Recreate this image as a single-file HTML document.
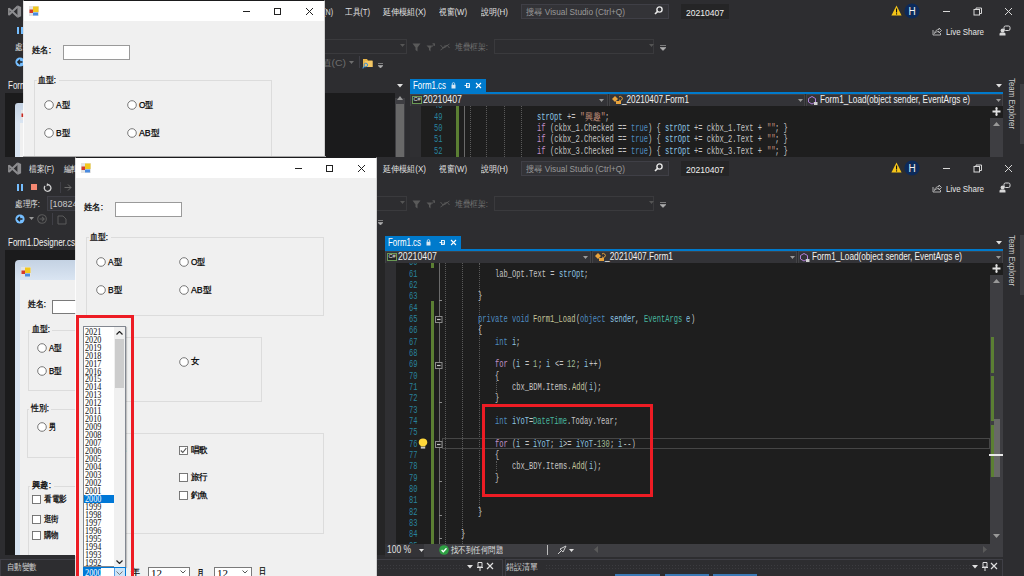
<!DOCTYPE html>
<html><head><meta charset="utf-8"><style>
html,body{margin:0;padding:0;}
body{width:1024px;height:576px;overflow:hidden;position:relative;background:#2d2d30;font-family:"Liberation Sans",sans-serif;}
div,span{position:absolute;white-space:pre;}
</style></head><body>
<div style="left:0;top:0;width:1024px;height:157px;overflow:hidden;background:#2d2d30">
<svg style="position:absolute;left:4px;top:3px" width="24" height="20" viewBox="0 0 24 20"><g fill="#8d8d90" stroke="none"><path d="M13.4 2.2 L17.1 3.9 V13.3 L13.4 15 L13.4 2.2 Z"/><rect x="4.1" y="5" width="1.6" height="7.3"/></g><path d="M4.9 5.6 L13.6 13.6 M4.9 11.7 L13.6 3.6" stroke="#8d8d90" stroke-width="2.1" fill="none"/></svg>
<span class="t" style="left:29px;top:8.27px;font-size:9px;line-height:9px;color:#e0e0e0;font-family:'Liberation Sans', sans-serif;transform:scaleX(0.8475);transform-origin:0 0;">檔案(F)</span>
<span class="t" style="left:64px;top:8.27px;font-size:9px;line-height:9px;color:#e0e0e0;font-family:'Liberation Sans', sans-serif;transform:scaleX(0.8333);transform-origin:0 0;">編輯(E)</span>
<span class="t" style="left:99px;top:8.27px;font-size:9px;line-height:9px;color:#e0e0e0;font-family:'Liberation Sans', sans-serif;transform:scaleX(0.8333);transform-origin:0 0;">檢視(V)</span>
<span class="t" style="left:134px;top:8.27px;font-size:9px;line-height:9px;color:#e0e0e0;font-family:'Liberation Sans', sans-serif;transform:scaleX(0.8333);transform-origin:0 0;">專案(P)</span>
<span class="t" style="left:169px;top:8.27px;font-size:9px;line-height:9px;color:#e0e0e0;font-family:'Liberation Sans', sans-serif;transform:scaleX(0.8333);transform-origin:0 0;">建置(B)</span>
<span class="t" style="left:204px;top:8.27px;font-size:9px;line-height:9px;color:#e0e0e0;font-family:'Liberation Sans', sans-serif;transform:scaleX(0.8197);transform-origin:0 0;">偵錯(D)</span>
<span class="t" style="left:239px;top:8.27px;font-size:9px;line-height:9px;color:#e0e0e0;font-family:'Liberation Sans', sans-serif;transform:scaleX(0.8333);transform-origin:0 0;">測試(S)</span>
<span class="t" style="left:274px;top:8.27px;font-size:9px;line-height:9px;color:#e0e0e0;font-family:'Liberation Sans', sans-serif;transform:scaleX(0.8197);transform-origin:0 0;">分析(N)</span>
<span class="t" style="left:309px;top:8.27px;font-size:9px;line-height:9px;color:#e0e0e0;font-family:'Liberation Sans', sans-serif;transform:scaleX(0.7869);transform-origin:0 0;">分析(N)</span>
<span class="t" style="left:345px;top:8.27px;font-size:9px;line-height:9px;color:#e0e0e0;font-family:'Liberation Sans', sans-serif;transform:scaleX(0.8475);transform-origin:0 0;">工具(T)</span>
<span class="t" style="left:383px;top:8.27px;font-size:9px;line-height:9px;color:#e0e0e0;font-family:'Liberation Sans', sans-serif;transform:scaleX(0.8958);transform-origin:0 0;">延伸模組(X)</span>
<span class="t" style="left:439px;top:8.27px;font-size:9px;line-height:9px;color:#e0e0e0;font-family:'Liberation Sans', sans-serif;transform:scaleX(0.8615);transform-origin:0 0;">視窗(W)</span>
<span class="t" style="left:481px;top:8.27px;font-size:9px;line-height:9px;color:#e0e0e0;font-family:'Liberation Sans', sans-serif;transform:scaleX(0.8852);transform-origin:0 0;">說明(H)</span>
<div style="left:521px;top:4px;width:148px;height:15px;background:#333337;border:1px solid #3f3f46;box-sizing:border-box"></div>
<span class="t" style="left:526px;top:7.77px;font-size:9px;line-height:9px;color:#999999;font-family:'Liberation Sans', sans-serif;transform:scaleX(0.9199);transform-origin:0 0;">搜尋 Visual Studio (Ctrl+Q)</span>
<svg style="position:absolute;left:654px;top:6px" width="9" height="9" viewBox="0 0 9 9"><circle cx="5.5" cy="3.5" r="2.6" fill="none" stroke="#e8e8e8" stroke-width="1.4"/><path d="M3.6 5.4 L1 8" stroke="#e8e8e8" stroke-width="1.6"/></svg>
<div style="left:681px;top:4px;width:48px;height:15px;background:#252526"></div>
<span class="t" style="left:686px;top:8.04px;font-size:9.5px;line-height:9.5px;color:#f1f1f1;font-family:'Liberation Sans', sans-serif;transform:scaleX(0.8987);transform-origin:0 0;">20210407</span>
<svg style="position:absolute;left:891px;top:5px" width="11" height="11" viewBox="0 0 11 11"><path d="M5.5 0.5 L10.6 10.5 H0.4 Z" fill="#f5c518"/><rect x="5" y="3.5" width="1.1" height="4" fill="#111"/><rect x="5" y="8.3" width="1.1" height="1.2" fill="#111"/></svg>
<svg style="position:absolute;left:904px;top:3px" width="16" height="16" viewBox="0 0 16 16"><circle cx="8" cy="8" r="7.6" fill="#0c2a5a"/><text x="8" y="11.6" font-family="Liberation Sans" font-size="10" fill="#f0f0f0" text-anchor="middle">H</text></svg>
<div style="left:943px;top:11px;width:7px;height:1px;background:#d8d8d8"></div>
<svg style="position:absolute;left:973px;top:7px" width="10" height="9" viewBox="0 0 10 9"><rect x="1" y="2.5" width="5.5" height="5.5" fill="none" stroke="#d8d8d8" stroke-width="1"/><path d="M3 2.5 V1 H8.5 V6.5 H6.5" fill="none" stroke="#d8d8d8" stroke-width="1"/></svg>
<svg style="position:absolute;left:1004px;top:7px" width="9" height="9" viewBox="0 0 9 9"><path d="M1 1 L8 8 M8 1 L1 8" stroke="#d8d8d8" stroke-width="1"/></svg>
<div style="left:7px;top:25px;width:3px;height:11px;background-image:radial-gradient(#55555a 0.6px, transparent 0.7px);background-size:2px 2px"></div>
<div style="left:7px;top:40px;width:3px;height:13px;background-image:radial-gradient(#55555a 0.6px, transparent 0.7px);background-size:2px 2px"></div>
<div style="left:7px;top:56px;width:3px;height:12px;background-image:radial-gradient(#55555a 0.6px, transparent 0.7px);background-size:2px 2px"></div>
<div style="left:17px;top:27px;width:2px;height:7px;background:#75beff"></div>
<div style="left:20.5px;top:27px;width:2px;height:7px;background:#75beff"></div>
<div style="left:31px;top:27px;width:6px;height:6px;background:#f48771"></div>
<svg style="position:absolute;left:43px;top:26px" width="9" height="9" viewBox="0 0 9 9"><path d="M2 3 A3.3 3.3 0 1 0 4.5 1.7" fill="none" stroke="#d0d0d0" stroke-width="1.3"/><path d="M4 0 L6 2 L3.5 3.2 Z" fill="#d0d0d0"/></svg>
<div style="left:60px;top:25px;width:1px;height:11px;background:#3f3f46"></div>
<svg style="position:absolute;left:64px;top:26px" width="8" height="9" viewBox="0 0 8 9"><path d="M0.5 4.5 H7 M4 1.5 L7 4.5 L4 7.5" fill="none" stroke="#6a6a6a" stroke-width="1"/></svg>
<svg style="position:absolute;left:932px;top:26px" width="10" height="10" viewBox="0 0 10 10"><path d="M1 4 V9 H8.5 V7" fill="none" stroke="#bfbfbf" stroke-width="0.9"/><path d="M2.5 7.5 C3 4.5 5 3.5 7 3.5 V2 L9.5 4.5 L7 7 V5.5 C5 5.5 3.8 6 2.5 7.5 Z" fill="none" stroke="#bfbfbf" stroke-width="0.9"/></svg>
<span class="t" style="left:946px;top:27.04px;font-size:9.5px;line-height:9.5px;color:#e6e6e6;font-family:'Liberation Sans', sans-serif;transform:scaleX(0.8366);transform-origin:0 0;">Live Share</span>
<svg style="position:absolute;left:999px;top:25px" width="12" height="11" viewBox="0 0 12 11"><rect x="5" y="1" width="6" height="4.5" rx="1.5" fill="none" stroke="#d8d8d8" stroke-width="1"/><circle cx="3.6" cy="5.5" r="2" fill="#d8d8d8"/><path d="M0.5 10.5 V9 C0.5 8 1.5 7.6 3.6 7.6 C5.7 7.6 6.5 8 6.5 9 V10.5 Z" fill="#d8d8d8"/></svg>
<span class="t" style="left:15px;top:42.77px;font-size:9px;line-height:9px;color:#e0e0e0;font-family:'Liberation Sans', sans-serif;transform:scaleX(0.8470);transform-origin:0 0;">處理序:</span>
<div style="left:47px;top:39px;width:120px;height:15px;background:#333337;border:1px solid #3f3f46;box-sizing:border-box"></div>
<span class="t" style="left:50px;top:42.77px;font-size:9px;line-height:9px;color:#c8c8c8;font-family:'Liberation Sans', sans-serif;transform:scaleX(1.0045);transform-origin:0 0;">[10824] 20210407.exe</span>
<div style="left:180px;top:39px;width:227px;height:15px;background:#2d2d30;border:1px solid #3a3a3d;box-sizing:border-box"></div>
<svg style="position:absolute;left:400px;top:44px" width="5" height="4" viewBox="0 0 5 4"><path d="M0 0 H5 L2.5 3 Z" fill="#555"/></svg>
<svg style="position:absolute;left:412px;top:43px" width="9" height="9" viewBox="0 0 9 9"><path d="M0.5 0.5 H8.5 L5.5 4.5 V8.5 L3.5 7 V4.5 Z" fill="#5a5a5a"/></svg>
<svg style="position:absolute;left:426px;top:43px" width="9" height="9" viewBox="0 0 9 9"><path d="M0.5 2.5 H6 L4.5 5 V8.5 L3 7 V5 Z" fill="#5a5a5a"/><path d="M5 4.5 L8.5 1 M6.5 0.8 H8.7 V3" fill="none" stroke="#5a5a5a"/></svg>
<svg style="position:absolute;left:440px;top:43px" width="10" height="8" viewBox="0 0 10 8"><path d="M0.5 2 L3 5 L5.5 2 M4.5 5 L7 2 L9.5 5 M0.5 7 L9.5 1" fill="none" stroke="#5a5a5a" stroke-width="0.9"/></svg>
<span class="t" style="left:455px;top:42.77px;font-size:9px;line-height:9px;color:#6e6e6e;font-family:'Liberation Sans', sans-serif;transform:scaleX(0.8568);transform-origin:0 0;">堆疊框架:</span>
<div style="left:494px;top:39px;width:160px;height:15px;background:#2d2d30;border:1px solid #3a3a3d;box-sizing:border-box"></div>
<svg style="position:absolute;left:649px;top:44px" width="5" height="4" viewBox="0 0 5 4"><path d="M0 0 H5 L2.5 3 Z" fill="#555"/></svg>
<svg style="position:absolute;left:660px;top:45px" width="6" height="6" viewBox="0 0 6 6"><path d="M0 0.5 H6 M0 2.5 H6 L3 5.5 Z" fill="#b0b0b0" stroke="#b0b0b0" stroke-width="0.6"/></svg>
<svg style="position:absolute;left:15px;top:57px" width="10" height="10" viewBox="0 0 10 10"><circle cx="5" cy="5" r="4.6" fill="#75beff"/><path d="M7.5 5 H3 M5 2.8 L2.8 5 L5 7.2" fill="none" stroke="#1e1e1e" stroke-width="1.3"/></svg>
<svg style="position:absolute;left:29px;top:60px" width="5" height="4" viewBox="0 0 5 4"><path d="M0 0 H5 L2.5 3 Z" fill="#999"/></svg>
<svg style="position:absolute;left:37px;top:57px" width="10" height="10" viewBox="0 0 10 10"><circle cx="5" cy="5" r="4.3" fill="none" stroke="#5a5a5a" stroke-width="1.1"/><path d="M2.5 5 H7 M5 2.8 L7.2 5 L5 7.2" fill="none" stroke="#5a5a5a" stroke-width="1.1"/></svg>
<div style="left:52px;top:56px;width:1px;height:12px;background:#3f3f46"></div>
<svg style="position:absolute;left:57px;top:57px" width="10" height="11" viewBox="0 0 10 11"><path d="M1 2 H6 L9 5 V10 H1 Z" fill="none" stroke="#5a5a5a"/></svg>
<span class="t" style="left:300px;top:58.77px;font-size:9px;line-height:9px;color:#6e6e6e;font-family:'Liberation Sans', sans-serif;transform:scaleX(1.1646);transform-origin:0 0;">顯示值(C)</span>
<svg style="position:absolute;left:349px;top:61px" width="5" height="4" viewBox="0 0 5 4"><path d="M0 0 H5 L2.5 3 Z" fill="#6e6e6e"/></svg>
<div style="left:359px;top:56px;width:1px;height:12px;background:#3f3f46"></div>
<svg style="position:absolute;left:362px;top:57px" width="11" height="12" viewBox="0 0 11 12"><path d="M1 2 H5 L6 3.5 H10.5 V10 H1 Z" fill="#e8b54a"/><rect x="3" y="4" width="7.5" height="6" fill="#f3c766"/><circle cx="3.8" cy="8" r="1.8" fill="none" stroke="#3f8fd6" stroke-width="1"/><path d="M2.6 9.3 L0.6 11.3" stroke="#3f8fd6" stroke-width="1.2"/></svg>
<svg style="position:absolute;left:378px;top:63px" width="5" height="6" viewBox="0 0 5 6"><path d="M0 0.5 H5 M0 2.5 H5 L2.5 5 Z" fill="#b0b0b0" stroke="#b0b0b0" stroke-width="0.6"/></svg>
<span class="t" style="left:1007px;top:78px;font-size:9px;line-height:9px;transform:scaleY(0.88);transform-origin:0 0;color:#c8c8c8;font-family:'Liberation Sans',sans-serif;writing-mode:vertical-rl;">Team Explorer</span>
<div style="left:1020px;top:84px;width:4px;height:60px;background:#3e3e42"></div>
<div style="left:410px;top:79px;width:76px;height:13px;background:#007acc"></div>
<span class="t" style="left:413px;top:81.30px;font-size:10px;line-height:10px;color:#ffffff;font-family:'Liberation Sans', sans-serif;transform:scaleX(0.7919);transform-origin:0 0;">Form1.cs</span>
<svg style="position:absolute;left:451px;top:82px" width="5" height="7" viewBox="0 0 5 7"><rect x="0.5" y="2.8" width="4" height="3.7" fill="#d8e8f4"/><path d="M1.3 3 V1.8 A1.2 1.2 0 0 1 3.7 1.8 V3" fill="none" stroke="#d8e8f4" stroke-width="0.8"/></svg>
<svg style="position:absolute;left:464px;top:82px" width="7" height="7" viewBox="0 0 7 7"><path d="M0.5 3.5 H2.5 M2.5 1 V6 M2.5 1.5 H5.5 V5.5 H2.5 M2.5 4 H5.5" fill="none" stroke="#fff" stroke-width="0.9"/></svg>
<svg style="position:absolute;left:475px;top:82px" width="7" height="7" viewBox="0 0 7 7"><path d="M1 1 L6 6 M6 1 L1 6" stroke="#fff" stroke-width="1.1"/></svg>
<div style="left:410px;top:92px;width:593px;height:2px;background:#007acc"></div>
<div style="left:410px;top:94px;width:593px;height:12.5px;background:#2d2d30"></div>
<div style="left:410px;top:94px;width:198px;height:12.5px;background:#333337;border:1px solid #434346;box-sizing:border-box"></div>
<div style="left:609px;top:94px;width:196px;height:12.5px;background:#333337;border:1px solid #434346;box-sizing:border-box"></div>
<div style="left:806px;top:94px;width:197px;height:12.5px;background:#333337;border:1px solid #434346;box-sizing:border-box"></div>
<div style="left:412px;top:95.5px;width:10px;height:8px;border:1px solid #6a9955;box-sizing:border-box;background:#252526"></div>
<span class="t" style="left:413.5px;top:97.12px;font-size:5.5px;line-height:5.5px;color:#e0e0e0;font-family:'Liberation Sans', sans-serif;">C#</span>
<span class="t" style="left:423px;top:95.30px;font-size:10px;line-height:10px;color:#f1f1f1;font-family:'Liberation Sans', sans-serif;transform:scaleX(0.8764);transform-origin:0 0;">20210407</span>
<svg style="position:absolute;left:599px;top:99px" width="5" height="3" viewBox="0 0 5 3"><path d="M0 0 H5 L2.5 3 Z" fill="#999"/></svg>
<svg style="position:absolute;left:611px;top:95px" width="12" height="10" viewBox="0 0 12 10"><path d="M1 4 L4 1 L7 4 L4 7 Z" fill="#e8a33d"/><path d="M5 6 H10 V9 H5 Z" fill="#e8a33d"/><path d="M8 2 A2 2 0 1 1 8 5" fill="none" stroke="#e8a33d" stroke-width="1"/></svg>
<span class="t" style="left:622px;top:95.30px;font-size:10px;line-height:10px;color:#f1f1f1;font-family:'Liberation Sans', sans-serif;transform:scaleX(0.8197);transform-origin:0 0;">_20210407.Form1</span>
<svg style="position:absolute;left:798px;top:99px" width="5" height="3" viewBox="0 0 5 3"><path d="M0 0 H5 L2.5 3 Z" fill="#999"/></svg>
<svg style="position:absolute;left:808px;top:96px" width="10" height="10" viewBox="0 0 10 10"><path d="M4 0.5 L7.5 2.5 V6 L4 8 L0.5 6 V2.5 Z" fill="none" stroke="#b180d7" stroke-width="1"/><rect x="6" y="6" width="3.5" height="3" fill="#d0d0d0"/></svg>
<span class="t" style="left:820px;top:95.30px;font-size:10px;line-height:10px;color:#f1f1f1;font-family:'Liberation Sans', sans-serif;transform:scaleX(0.8202);transform-origin:0 0;">Form1_Load(object sender, EventArgs e)</span>
<svg style="position:absolute;left:996px;top:99px" width="5" height="3" viewBox="0 0 5 3"><path d="M0 0 H5 L2.5 3 Z" fill="#999"/></svg>
<svg style="position:absolute;left:996px;top:84px" width="6" height="4" viewBox="0 0 6 4"><path d="M0 0 H6 L3 3.5 Z" fill="#e0e0e0"/></svg>
<div style="left:410px;top:106px;width:580px;height:281px;background:#1e1e1e"></div>
<div style="left:410px;top:106px;width:11px;height:281px;background:#2f2f32"></div>
<div style="left:990px;top:106px;width:13px;height:281px;background:#3e3e42"></div>
<div style="left:990px;top:106px;width:13px;height:12px;background:#1e1e1e"></div>
<svg style="position:absolute;left:992px;top:107px" width="9" height="9" viewBox="0 0 9 9"><path d="M4.5 0.5 V8.5 M0.5 4.5 H8.5" stroke="#e0e0e0" stroke-width="1.8"/><path d="M3 1.5 L4.5 0 L6 1.5 M3 7.5 L4.5 9 L6 7.5" fill="#e0e0e0"/></svg>
<svg style="position:absolute;left:993px;top:122px" width="7" height="4" viewBox="0 0 7 4"><path d="M0 4 L3.5 0 L7 4 Z" fill="#999"/></svg>
<div style="left:470px;top:106px;width:1px;height:51px;border-left:1px dotted #5a5a5a"></div>
<div style="left:486px;top:106px;width:1px;height:51px;border-left:1px dotted #5a5a5a"></div>
<div style="left:504px;top:106px;width:1px;height:51px;border-left:1px dotted #5a5a5a"></div>
<div style="left:521px;top:106px;width:1px;height:51px;border-left:1px dotted #5a5a5a"></div>
<div style="left:456px;top:106px;width:3px;height:51px;background:#5b7f33"></div>
<div style="left:463.5px;top:106px;width:1px;height:51px;background:#6a6a6a"></div>
<div style="left:0px;top:106px;width:1024px;height:51px;overflow:hidden">
<span class="t" style="left:434px;top:-4.63px;font-size:10px;line-height:10px;color:#2b91af;font-family:'Liberation Mono', monospace;transform:scaleX(0.7074);transform-origin:0 0;opacity:0.88;">48</span>
<span class="t" style="left:434px;top:6.70px;font-size:10px;line-height:10px;color:#2b91af;font-family:'Liberation Mono', monospace;transform:scaleX(0.7074);transform-origin:0 0;opacity:0.88;">49</span>
<span class="t" style="left:537.0px;top:6.70px;font-size:10px;line-height:10px;color:#9cdcfe;font-family:'Liberation Mono', monospace;transform:scaleX(0.7080);transform-origin:0 0;opacity:0.88;">strOpt</span>
<span class="t" style="left:566.75px;top:6.70px;font-size:10px;line-height:10px;color:#dcdcdc;font-family:'Liberation Mono', monospace;transform:scaleX(0.7077);transform-origin:0 0;opacity:0.88;">+= </span>
<span class="t" style="left:579.5px;top:6.70px;font-size:10px;line-height:10px;color:#d69d85;font-family:'Liberation Mono', monospace;transform:scaleX(0.7965);transform-origin:0 0;opacity:0.88;">&quot;興趣&quot;</span>
<span class="t" style="left:605.0px;top:6.70px;font-size:10px;line-height:10px;color:#dcdcdc;font-family:'Liberation Mono', monospace;transform:scaleX(0.7065);transform-origin:0 0;opacity:0.88;">;</span>
<span class="t" style="left:434px;top:18.03px;font-size:10px;line-height:10px;color:#2b91af;font-family:'Liberation Mono', monospace;transform:scaleX(0.7074);transform-origin:0 0;opacity:0.88;">50</span>
<span class="t" style="left:537.0px;top:18.03px;font-size:10px;line-height:10px;color:#d8a0df;font-family:'Liberation Mono', monospace;transform:scaleX(0.7074);transform-origin:0 0;opacity:0.88;">if</span>
<span class="t" style="left:549.75px;top:18.03px;font-size:10px;line-height:10px;color:#dcdcdc;font-family:'Liberation Mono', monospace;transform:scaleX(0.7081);transform-origin:0 0;opacity:0.88;">(ckbx_1.Checked == </span>
<span class="t" style="left:630.5px;top:18.03px;font-size:10px;line-height:10px;color:#569cd6;font-family:'Liberation Mono', monospace;transform:scaleX(0.7079);transform-origin:0 0;opacity:0.88;">true</span>
<span class="t" style="left:647.5px;top:18.03px;font-size:10px;line-height:10px;color:#dcdcdc;font-family:'Liberation Mono', monospace;transform:scaleX(0.7079);transform-origin:0 0;opacity:0.88;">) { </span>
<span class="t" style="left:664.5px;top:18.03px;font-size:10px;line-height:10px;color:#9cdcfe;font-family:'Liberation Mono', monospace;transform:scaleX(0.7080);transform-origin:0 0;opacity:0.88;">strOpt</span>
<span class="t" style="left:694.25px;top:18.03px;font-size:10px;line-height:10px;color:#dcdcdc;font-family:'Liberation Mono', monospace;transform:scaleX(0.7081);transform-origin:0 0;opacity:0.88;">+= ckbx_1.Text + </span>
<span class="t" style="left:766.5px;top:18.03px;font-size:10px;line-height:10px;color:#d69d85;font-family:'Liberation Mono', monospace;transform:scaleX(0.7074);transform-origin:0 0;opacity:0.88;">&quot;&quot;</span>
<span class="t" style="left:775.0px;top:18.03px;font-size:10px;line-height:10px;color:#dcdcdc;font-family:'Liberation Mono', monospace;transform:scaleX(0.7077);transform-origin:0 0;opacity:0.88;">; }</span>
<span class="t" style="left:434px;top:29.35px;font-size:10px;line-height:10px;color:#2b91af;font-family:'Liberation Mono', monospace;transform:scaleX(0.7074);transform-origin:0 0;opacity:0.88;">51</span>
<span class="t" style="left:537.0px;top:29.35px;font-size:10px;line-height:10px;color:#d8a0df;font-family:'Liberation Mono', monospace;transform:scaleX(0.7074);transform-origin:0 0;opacity:0.88;">if</span>
<span class="t" style="left:549.75px;top:29.35px;font-size:10px;line-height:10px;color:#dcdcdc;font-family:'Liberation Mono', monospace;transform:scaleX(0.7081);transform-origin:0 0;opacity:0.88;">(ckbx_2.Checked == </span>
<span class="t" style="left:630.5px;top:29.35px;font-size:10px;line-height:10px;color:#569cd6;font-family:'Liberation Mono', monospace;transform:scaleX(0.7079);transform-origin:0 0;opacity:0.88;">true</span>
<span class="t" style="left:647.5px;top:29.35px;font-size:10px;line-height:10px;color:#dcdcdc;font-family:'Liberation Mono', monospace;transform:scaleX(0.7079);transform-origin:0 0;opacity:0.88;">) { </span>
<span class="t" style="left:664.5px;top:29.35px;font-size:10px;line-height:10px;color:#9cdcfe;font-family:'Liberation Mono', monospace;transform:scaleX(0.7080);transform-origin:0 0;opacity:0.88;">strOpt</span>
<span class="t" style="left:694.25px;top:29.35px;font-size:10px;line-height:10px;color:#dcdcdc;font-family:'Liberation Mono', monospace;transform:scaleX(0.7081);transform-origin:0 0;opacity:0.88;">+= ckbx_2.Text + </span>
<span class="t" style="left:766.5px;top:29.35px;font-size:10px;line-height:10px;color:#d69d85;font-family:'Liberation Mono', monospace;transform:scaleX(0.7074);transform-origin:0 0;opacity:0.88;">&quot;&quot;</span>
<span class="t" style="left:775.0px;top:29.35px;font-size:10px;line-height:10px;color:#dcdcdc;font-family:'Liberation Mono', monospace;transform:scaleX(0.7077);transform-origin:0 0;opacity:0.88;">; }</span>
<span class="t" style="left:434px;top:40.68px;font-size:10px;line-height:10px;color:#2b91af;font-family:'Liberation Mono', monospace;transform:scaleX(0.7074);transform-origin:0 0;opacity:0.88;">52</span>
<span class="t" style="left:537.0px;top:40.68px;font-size:10px;line-height:10px;color:#d8a0df;font-family:'Liberation Mono', monospace;transform:scaleX(0.7074);transform-origin:0 0;opacity:0.88;">if</span>
<span class="t" style="left:549.75px;top:40.68px;font-size:10px;line-height:10px;color:#dcdcdc;font-family:'Liberation Mono', monospace;transform:scaleX(0.7081);transform-origin:0 0;opacity:0.88;">(ckbx_3.Checked == </span>
<span class="t" style="left:630.5px;top:40.68px;font-size:10px;line-height:10px;color:#569cd6;font-family:'Liberation Mono', monospace;transform:scaleX(0.7079);transform-origin:0 0;opacity:0.88;">true</span>
<span class="t" style="left:647.5px;top:40.68px;font-size:10px;line-height:10px;color:#dcdcdc;font-family:'Liberation Mono', monospace;transform:scaleX(0.7079);transform-origin:0 0;opacity:0.88;">) { </span>
<span class="t" style="left:664.5px;top:40.68px;font-size:10px;line-height:10px;color:#9cdcfe;font-family:'Liberation Mono', monospace;transform:scaleX(0.7080);transform-origin:0 0;opacity:0.88;">strOpt</span>
<span class="t" style="left:694.25px;top:40.68px;font-size:10px;line-height:10px;color:#dcdcdc;font-family:'Liberation Mono', monospace;transform:scaleX(0.7081);transform-origin:0 0;opacity:0.88;">+= ckbx_3.Text + </span>
<span class="t" style="left:766.5px;top:40.68px;font-size:10px;line-height:10px;color:#d69d85;font-family:'Liberation Mono', monospace;transform:scaleX(0.7074);transform-origin:0 0;opacity:0.88;">&quot;&quot;</span>
<span class="t" style="left:775.0px;top:40.68px;font-size:10px;line-height:10px;color:#dcdcdc;font-family:'Liberation Mono', monospace;transform:scaleX(0.7077);transform-origin:0 0;opacity:0.88;">; }</span>
</div>
<span class="t" style="left:8px;top:80.80px;font-size:10px;line-height:10px;color:#f1f1f1;font-family:'Liberation Sans', sans-serif;transform:scaleX(0.7984);transform-origin:0 0;">Form1.Designer.cs</span>
<div style="left:5px;top:93px;width:390px;height:64px;background:#1b1b1c"></div>
<div style="left:395px;top:98px;width:10px;height:59px;background:#3e3e42"></div>
<svg style="position:absolute;left:397px;top:96px" width="6" height="4" viewBox="0 0 6 4"><path d="M0 4 L3 0 L6 4 Z" fill="#999"/></svg>
<div style="left:396px;top:104px;width:8px;height:53px;background:#686868"></div>
<svg style="position:absolute;left:397px;top:84px" width="6" height="4" viewBox="0 0 6 4"><path d="M0 0 H6 L3 3.5 Z" fill="#e0e0e0"/></svg>
<div style="left:15px;top:103px;width:60px;height:54px;background:linear-gradient(#c4d2e3 0px,#dae5f2 20px,#d8e4f2 100%);border-radius:3px 3px 0 0"></div>
<div style="left:20px;top:123px;width:55px;height:34px;background:#f0f0f0"></div>
<svg style="position:absolute;left:21px;top:110px" width="10" height="10" viewBox="0 0 10 10"><rect x="0" y="0" width="10" height="10" fill="#e4e4e4"/><rect x="4" y="0.5" width="5.5" height="5.5" fill="#f2c81e"/><rect x="0.5" y="3.5" width="3.5" height="3.5" fill="#c8281e"/><rect x="4" y="6.5" width="5" height="3" fill="#4a8be0"/></svg>
<div style="left:23px;top:0px;width:302px;height:420px;background:#f0f0f0;border:1px solid rgba(0,0,0,0.38);border-left-color:rgba(255,255,255,0.85);border-right-color:#d0d0d0;background-clip:padding-box;box-sizing:border-box;overflow:hidden">
<div style="left:0px;top:0px;width:300px;height:20px;background:#ffffff"></div>
<svg style="position:absolute;left:5px;top:5px" width="10" height="10" viewBox="0 0 10 10"><rect x="0" y="0" width="10" height="10" fill="#e4e4e4"/><rect x="4" y="0.5" width="5.5" height="5.5" fill="#f2c81e"/><rect x="0.5" y="3.5" width="3.5" height="3.5" fill="#d43a2a"/><rect x="4" y="6.5" width="5" height="3" fill="#4a8be0"/></svg>
<div style="left:219px;top:10px;width:7px;height:1px;background:#222"></div>
<div style="left:250px;top:7px;width:7px;height:7px;border:1px solid #222;box-sizing:border-box"></div>
<svg style="position:absolute;left:281px;top:6px" width="9" height="9" viewBox="0 0 9 9"><path d="M1 1 L8 8 M8 1 L1 8" stroke="#222" stroke-width="1"/></svg>
<span class="t" style="left:8px;top:44.77px;font-size:9px;line-height:9px;color:#000000;font-family:'Liberation Sans', sans-serif;transform:scaleX(0.9261);transform-origin:0 0;-webkit-text-stroke:0.25px #000;">姓名:</span>
<div style="left:39px;top:44px;width:67px;height:15px;background:#fff;border:1px solid #9a9a9a;box-sizing:border-box"></div>
<div style="left:10px;top:79px;width:238px;height:79px;border:1px solid #dcdcdc;box-sizing:border-box"></div>
<div style="left:13px;top:74px;width:22px;height:10px;background:#f0f0f0"></div>
<span class="t" style="left:14px;top:74.77px;font-size:9px;line-height:9px;color:#000000;font-family:'Liberation Sans', sans-serif;transform:scaleX(0.8774);transform-origin:0 0;-webkit-text-stroke:0.25px #000;">血型:</span>
<svg style="position:absolute;left:20px;top:99px" width="10" height="10" viewBox="0 0 10 10"><circle cx="5" cy="5" r="4.3" fill="#fff" stroke="#6a6a6a" stroke-width="0.9"/></svg>
<span class="t" style="left:32px;top:99.77px;font-size:9px;line-height:9px;color:#000000;font-family:'Liberation Sans', sans-serif;transform:scaleX(0.9324);transform-origin:0 0;-webkit-text-stroke:0.25px #000;">A型</span>
<svg style="position:absolute;left:102.5px;top:99px" width="10" height="10" viewBox="0 0 10 10"><circle cx="5" cy="5" r="4.3" fill="#fff" stroke="#6a6a6a" stroke-width="0.9"/></svg>
<span class="t" style="left:114.5px;top:99.77px;font-size:9px;line-height:9px;color:#000000;font-family:'Liberation Sans', sans-serif;transform:scaleX(0.9054);transform-origin:0 0;-webkit-text-stroke:0.25px #000;">O型</span>
<svg style="position:absolute;left:20px;top:127px" width="10" height="10" viewBox="0 0 10 10"><circle cx="5" cy="5" r="4.3" fill="#fff" stroke="#6a6a6a" stroke-width="0.9"/></svg>
<span class="t" style="left:32px;top:127.77px;font-size:9px;line-height:9px;color:#000000;font-family:'Liberation Sans', sans-serif;transform:scaleX(0.9324);transform-origin:0 0;-webkit-text-stroke:0.25px #000;">B型</span>
<svg style="position:absolute;left:102.5px;top:127px" width="10" height="10" viewBox="0 0 10 10"><circle cx="5" cy="5" r="4.3" fill="#fff" stroke="#6a6a6a" stroke-width="0.9"/></svg>
<span class="t" style="left:114.5px;top:127.77px;font-size:9px;line-height:9px;color:#000000;font-family:'Liberation Sans', sans-serif;transform:scaleX(0.9755);transform-origin:0 0;-webkit-text-stroke:0.25px #000;">AB型</span>
<div style="left:10px;top:179px;width:176px;height:65px;border:1px solid #dcdcdc;box-sizing:border-box"></div>
<div style="left:13px;top:174px;width:22px;height:10px;background:#f0f0f0"></div>
<span class="t" style="left:14px;top:174.77px;font-size:9px;line-height:9px;color:#000000;font-family:'Liberation Sans', sans-serif;transform:scaleX(0.8774);transform-origin:0 0;-webkit-text-stroke:0.25px #000;">性別:</span>
<svg style="position:absolute;left:20px;top:198.5px" width="10" height="10" viewBox="0 0 10 10"><circle cx="5" cy="5" r="4.3" fill="#fff" stroke="#6a6a6a" stroke-width="0.9"/></svg>
<span class="t" style="left:32px;top:199.27px;font-size:9px;line-height:9px;color:#000000;font-family:'Liberation Sans', sans-serif;transform:scaleX(0.8889);transform-origin:0 0;-webkit-text-stroke:0.25px #000;">男</span>
<svg style="position:absolute;left:102.5px;top:198.5px" width="10" height="10" viewBox="0 0 10 10"><circle cx="5" cy="5" r="4.3" fill="#fff" stroke="#6a6a6a" stroke-width="0.9"/></svg>
<span class="t" style="left:114.5px;top:199.27px;font-size:9px;line-height:9px;color:#000000;font-family:'Liberation Sans', sans-serif;transform:scaleX(0.9444);transform-origin:0 0;-webkit-text-stroke:0.25px #000;">女</span>
<div style="left:10px;top:275px;width:238px;height:101px;border:1px solid #dcdcdc;box-sizing:border-box"></div>
<div style="left:13px;top:270px;width:22px;height:10px;background:#f0f0f0"></div>
<span class="t" style="left:14px;top:270.77px;font-size:9px;line-height:9px;color:#000000;font-family:'Liberation Sans', sans-serif;transform:scaleX(0.8774);transform-origin:0 0;-webkit-text-stroke:0.25px #000;">興趣:</span>
<svg style="position:absolute;left:103px;top:288.0px" width="9" height="9" viewBox="0 0 9 9"><rect x="0.5" y="0.5" width="8" height="8" fill="#fff" stroke="#6a6a6a" stroke-width="0.9"/><path d="M1.8 4.5 L3.8 6.5 L7.3 2.2" fill="none" stroke="#555" stroke-width="1.1"/></svg>
<span class="t" style="left:115px;top:288.27px;font-size:9px;line-height:9px;color:#000000;font-family:'Liberation Sans', sans-serif;transform:scaleX(0.9444);transform-origin:0 0;-webkit-text-stroke:0.25px #000;">唱歌</span>
<svg style="position:absolute;left:103px;top:315.0px" width="9" height="9" viewBox="0 0 9 9"><rect x="0.5" y="0.5" width="8" height="8" fill="#fff" stroke="#6a6a6a" stroke-width="0.9"/></svg>
<span class="t" style="left:115px;top:315.27px;font-size:9px;line-height:9px;color:#000000;font-family:'Liberation Sans', sans-serif;transform:scaleX(0.9444);transform-origin:0 0;-webkit-text-stroke:0.25px #000;">旅行</span>
<svg style="position:absolute;left:103px;top:332.5px" width="9" height="9" viewBox="0 0 9 9"><rect x="0.5" y="0.5" width="8" height="8" fill="#fff" stroke="#6a6a6a" stroke-width="0.9"/></svg>
<span class="t" style="left:115px;top:332.77px;font-size:9px;line-height:9px;color:#000000;font-family:'Liberation Sans', sans-serif;transform:scaleX(0.9444);transform-origin:0 0;-webkit-text-stroke:0.25px #000;">釣魚</span>
<svg style="position:absolute;left:20px;top:288.0px" width="9" height="9" viewBox="0 0 9 9"><rect x="0.5" y="0.5" width="8" height="8" fill="#fff" stroke="#6a6a6a" stroke-width="0.9"/></svg>
<span class="t" style="left:32px;top:288.27px;font-size:9px;line-height:9px;color:#000000;font-family:'Liberation Sans', sans-serif;transform:scaleX(0.6667);transform-origin:0 0;-webkit-text-stroke:0.25px #000;">看電影</span>
<svg style="position:absolute;left:20px;top:315.0px" width="9" height="9" viewBox="0 0 9 9"><rect x="0.5" y="0.5" width="8" height="8" fill="#fff" stroke="#6a6a6a" stroke-width="0.9"/></svg>
<span class="t" style="left:32px;top:315.27px;font-size:9px;line-height:9px;color:#000000;font-family:'Liberation Sans', sans-serif;transform:scaleX(0.5000);transform-origin:0 0;-webkit-text-stroke:0.25px #000;">逛街</span>
<svg style="position:absolute;left:20px;top:332.5px" width="9" height="9" viewBox="0 0 9 9"><rect x="0.5" y="0.5" width="8" height="8" fill="#fff" stroke="#6a6a6a" stroke-width="0.9"/></svg>
<span class="t" style="left:32px;top:332.77px;font-size:9px;line-height:9px;color:#000000;font-family:'Liberation Sans', sans-serif;transform:scaleX(0.5000);transform-origin:0 0;-webkit-text-stroke:0.25px #000;">購物</span>
<span class="t" style="left:55px;top:409.77px;font-size:9px;line-height:9px;color:#000000;font-family:'Liberation Sans', sans-serif;transform:scaleX(1.0000);transform-origin:0 0;-webkit-text-stroke:0.25px #000;">年</span>
<div style="left:72px;top:409px;width:42px;height:14px;background:#fff;border:1px solid #7a7a7a;box-sizing:border-box"></div>
<span class="t" style="left:75px;top:410.60px;font-size:10px;line-height:10px;color:#000000;font-family:'Liberation Serif', serif;transform:scaleX(1.1000);transform-origin:0 0;">12</span>
<svg style="position:absolute;left:104px;top:412px" width="6" height="4" viewBox="0 0 6 4"><path d="M0.5 0.5 L3 3 L5.5 0.5" fill="none" stroke="#444" stroke-width="0.9"/></svg>
<span class="t" style="left:121px;top:410.77px;font-size:9px;line-height:9px;color:#000000;font-family:'Liberation Sans', sans-serif;transform:scaleX(0.7778);transform-origin:0 0;-webkit-text-stroke:0.25px #000;">月</span>
<div style="left:138px;top:409px;width:38px;height:14px;background:#fff;border:1px solid #7a7a7a;box-sizing:border-box"></div>
<span class="t" style="left:141px;top:410.60px;font-size:10px;line-height:10px;color:#000000;font-family:'Liberation Serif', serif;transform:scaleX(1.1000);transform-origin:0 0;">12</span>
<svg style="position:absolute;left:166px;top:412px" width="6" height="4" viewBox="0 0 6 4"><path d="M0.5 0.5 L3 3 L5.5 0.5" fill="none" stroke="#444" stroke-width="0.9"/></svg>
<span class="t" style="left:183px;top:408.77px;font-size:9px;line-height:9px;color:#000000;font-family:'Liberation Sans', sans-serif;transform:scaleX(0.7778);transform-origin:0 0;-webkit-text-stroke:0.25px #000;">日</span>
</div>
<div style="left:23px;top:156px;width:303px;height:1px;background:#a8a8a8"></div>
</div>
<div style="left:0;top:157px;width:1024px;height:419px;overflow:hidden;background:#2d2d30">
<svg style="position:absolute;left:4px;top:3px" width="24" height="20" viewBox="0 0 24 20"><g fill="#8d8d90" stroke="none"><path d="M13.4 2.2 L17.1 3.9 V13.3 L13.4 15 L13.4 2.2 Z"/><rect x="4.1" y="5" width="1.6" height="7.3"/></g><path d="M4.9 5.6 L13.6 13.6 M4.9 11.7 L13.6 3.6" stroke="#8d8d90" stroke-width="2.1" fill="none"/></svg>
<span class="t" style="left:29px;top:8.27px;font-size:9px;line-height:9px;color:#e0e0e0;font-family:'Liberation Sans', sans-serif;transform:scaleX(0.8475);transform-origin:0 0;">檔案(F)</span>
<span class="t" style="left:64px;top:8.27px;font-size:9px;line-height:9px;color:#e0e0e0;font-family:'Liberation Sans', sans-serif;transform:scaleX(0.8333);transform-origin:0 0;">編輯(E)</span>
<span class="t" style="left:99px;top:8.27px;font-size:9px;line-height:9px;color:#e0e0e0;font-family:'Liberation Sans', sans-serif;transform:scaleX(0.8333);transform-origin:0 0;">檢視(V)</span>
<span class="t" style="left:134px;top:8.27px;font-size:9px;line-height:9px;color:#e0e0e0;font-family:'Liberation Sans', sans-serif;transform:scaleX(0.8333);transform-origin:0 0;">專案(P)</span>
<span class="t" style="left:169px;top:8.27px;font-size:9px;line-height:9px;color:#e0e0e0;font-family:'Liberation Sans', sans-serif;transform:scaleX(0.8333);transform-origin:0 0;">建置(B)</span>
<span class="t" style="left:204px;top:8.27px;font-size:9px;line-height:9px;color:#e0e0e0;font-family:'Liberation Sans', sans-serif;transform:scaleX(0.8197);transform-origin:0 0;">偵錯(D)</span>
<span class="t" style="left:239px;top:8.27px;font-size:9px;line-height:9px;color:#e0e0e0;font-family:'Liberation Sans', sans-serif;transform:scaleX(0.8333);transform-origin:0 0;">測試(S)</span>
<span class="t" style="left:274px;top:8.27px;font-size:9px;line-height:9px;color:#e0e0e0;font-family:'Liberation Sans', sans-serif;transform:scaleX(0.8197);transform-origin:0 0;">分析(N)</span>
<span class="t" style="left:309px;top:8.27px;font-size:9px;line-height:9px;color:#e0e0e0;font-family:'Liberation Sans', sans-serif;transform:scaleX(0.7869);transform-origin:0 0;">分析(N)</span>
<span class="t" style="left:345px;top:8.27px;font-size:9px;line-height:9px;color:#e0e0e0;font-family:'Liberation Sans', sans-serif;transform:scaleX(0.8475);transform-origin:0 0;">工具(T)</span>
<span class="t" style="left:383px;top:8.27px;font-size:9px;line-height:9px;color:#e0e0e0;font-family:'Liberation Sans', sans-serif;transform:scaleX(0.8958);transform-origin:0 0;">延伸模組(X)</span>
<span class="t" style="left:439px;top:8.27px;font-size:9px;line-height:9px;color:#e0e0e0;font-family:'Liberation Sans', sans-serif;transform:scaleX(0.8615);transform-origin:0 0;">視窗(W)</span>
<span class="t" style="left:481px;top:8.27px;font-size:9px;line-height:9px;color:#e0e0e0;font-family:'Liberation Sans', sans-serif;transform:scaleX(0.8852);transform-origin:0 0;">說明(H)</span>
<div style="left:521px;top:4px;width:148px;height:15px;background:#333337;border:1px solid #3f3f46;box-sizing:border-box"></div>
<span class="t" style="left:526px;top:7.77px;font-size:9px;line-height:9px;color:#999999;font-family:'Liberation Sans', sans-serif;transform:scaleX(0.9199);transform-origin:0 0;">搜尋 Visual Studio (Ctrl+Q)</span>
<svg style="position:absolute;left:654px;top:6px" width="9" height="9" viewBox="0 0 9 9"><circle cx="5.5" cy="3.5" r="2.6" fill="none" stroke="#e8e8e8" stroke-width="1.4"/><path d="M3.6 5.4 L1 8" stroke="#e8e8e8" stroke-width="1.6"/></svg>
<div style="left:681px;top:4px;width:48px;height:15px;background:#252526"></div>
<span class="t" style="left:686px;top:8.04px;font-size:9.5px;line-height:9.5px;color:#f1f1f1;font-family:'Liberation Sans', sans-serif;transform:scaleX(0.8987);transform-origin:0 0;">20210407</span>
<svg style="position:absolute;left:891px;top:5px" width="11" height="11" viewBox="0 0 11 11"><path d="M5.5 0.5 L10.6 10.5 H0.4 Z" fill="#f5c518"/><rect x="5" y="3.5" width="1.1" height="4" fill="#111"/><rect x="5" y="8.3" width="1.1" height="1.2" fill="#111"/></svg>
<svg style="position:absolute;left:904px;top:3px" width="16" height="16" viewBox="0 0 16 16"><circle cx="8" cy="8" r="7.6" fill="#0c2a5a"/><text x="8" y="11.6" font-family="Liberation Sans" font-size="10" fill="#f0f0f0" text-anchor="middle">H</text></svg>
<div style="left:943px;top:11px;width:7px;height:1px;background:#d8d8d8"></div>
<svg style="position:absolute;left:973px;top:7px" width="10" height="9" viewBox="0 0 10 9"><rect x="1" y="2.5" width="5.5" height="5.5" fill="none" stroke="#d8d8d8" stroke-width="1"/><path d="M3 2.5 V1 H8.5 V6.5 H6.5" fill="none" stroke="#d8d8d8" stroke-width="1"/></svg>
<svg style="position:absolute;left:1004px;top:7px" width="9" height="9" viewBox="0 0 9 9"><path d="M1 1 L8 8 M8 1 L1 8" stroke="#d8d8d8" stroke-width="1"/></svg>
<div style="left:7px;top:25px;width:3px;height:11px;background-image:radial-gradient(#55555a 0.6px, transparent 0.7px);background-size:2px 2px"></div>
<div style="left:7px;top:40px;width:3px;height:13px;background-image:radial-gradient(#55555a 0.6px, transparent 0.7px);background-size:2px 2px"></div>
<div style="left:7px;top:56px;width:3px;height:12px;background-image:radial-gradient(#55555a 0.6px, transparent 0.7px);background-size:2px 2px"></div>
<div style="left:17px;top:27px;width:2px;height:7px;background:#75beff"></div>
<div style="left:20.5px;top:27px;width:2px;height:7px;background:#75beff"></div>
<div style="left:31px;top:27px;width:6px;height:6px;background:#f48771"></div>
<svg style="position:absolute;left:43px;top:26px" width="9" height="9" viewBox="0 0 9 9"><path d="M2 3 A3.3 3.3 0 1 0 4.5 1.7" fill="none" stroke="#d0d0d0" stroke-width="1.3"/><path d="M4 0 L6 2 L3.5 3.2 Z" fill="#d0d0d0"/></svg>
<div style="left:60px;top:25px;width:1px;height:11px;background:#3f3f46"></div>
<svg style="position:absolute;left:64px;top:26px" width="8" height="9" viewBox="0 0 8 9"><path d="M0.5 4.5 H7 M4 1.5 L7 4.5 L4 7.5" fill="none" stroke="#6a6a6a" stroke-width="1"/></svg>
<svg style="position:absolute;left:932px;top:26px" width="10" height="10" viewBox="0 0 10 10"><path d="M1 4 V9 H8.5 V7" fill="none" stroke="#bfbfbf" stroke-width="0.9"/><path d="M2.5 7.5 C3 4.5 5 3.5 7 3.5 V2 L9.5 4.5 L7 7 V5.5 C5 5.5 3.8 6 2.5 7.5 Z" fill="none" stroke="#bfbfbf" stroke-width="0.9"/></svg>
<span class="t" style="left:946px;top:27.04px;font-size:9.5px;line-height:9.5px;color:#e6e6e6;font-family:'Liberation Sans', sans-serif;transform:scaleX(0.8366);transform-origin:0 0;">Live Share</span>
<svg style="position:absolute;left:999px;top:25px" width="12" height="11" viewBox="0 0 12 11"><rect x="5" y="1" width="6" height="4.5" rx="1.5" fill="none" stroke="#d8d8d8" stroke-width="1"/><circle cx="3.6" cy="5.5" r="2" fill="#d8d8d8"/><path d="M0.5 10.5 V9 C0.5 8 1.5 7.6 3.6 7.6 C5.7 7.6 6.5 8 6.5 9 V10.5 Z" fill="#d8d8d8"/></svg>
<span class="t" style="left:15px;top:42.77px;font-size:9px;line-height:9px;color:#e0e0e0;font-family:'Liberation Sans', sans-serif;transform:scaleX(0.8470);transform-origin:0 0;">處理序:</span>
<div style="left:47px;top:39px;width:120px;height:15px;background:#333337;border:1px solid #3f3f46;box-sizing:border-box"></div>
<span class="t" style="left:50px;top:42.77px;font-size:9px;line-height:9px;color:#c8c8c8;font-family:'Liberation Sans', sans-serif;transform:scaleX(1.0045);transform-origin:0 0;">[10824] 20210407.exe</span>
<div style="left:180px;top:39px;width:227px;height:15px;background:#2d2d30;border:1px solid #3a3a3d;box-sizing:border-box"></div>
<svg style="position:absolute;left:400px;top:44px" width="5" height="4" viewBox="0 0 5 4"><path d="M0 0 H5 L2.5 3 Z" fill="#555"/></svg>
<svg style="position:absolute;left:412px;top:43px" width="9" height="9" viewBox="0 0 9 9"><path d="M0.5 0.5 H8.5 L5.5 4.5 V8.5 L3.5 7 V4.5 Z" fill="#5a5a5a"/></svg>
<svg style="position:absolute;left:426px;top:43px" width="9" height="9" viewBox="0 0 9 9"><path d="M0.5 2.5 H6 L4.5 5 V8.5 L3 7 V5 Z" fill="#5a5a5a"/><path d="M5 4.5 L8.5 1 M6.5 0.8 H8.7 V3" fill="none" stroke="#5a5a5a"/></svg>
<svg style="position:absolute;left:440px;top:43px" width="10" height="8" viewBox="0 0 10 8"><path d="M0.5 2 L3 5 L5.5 2 M4.5 5 L7 2 L9.5 5 M0.5 7 L9.5 1" fill="none" stroke="#5a5a5a" stroke-width="0.9"/></svg>
<span class="t" style="left:455px;top:42.77px;font-size:9px;line-height:9px;color:#6e6e6e;font-family:'Liberation Sans', sans-serif;transform:scaleX(0.8568);transform-origin:0 0;">堆疊框架:</span>
<div style="left:494px;top:39px;width:160px;height:15px;background:#2d2d30;border:1px solid #3a3a3d;box-sizing:border-box"></div>
<svg style="position:absolute;left:649px;top:44px" width="5" height="4" viewBox="0 0 5 4"><path d="M0 0 H5 L2.5 3 Z" fill="#555"/></svg>
<svg style="position:absolute;left:660px;top:45px" width="6" height="6" viewBox="0 0 6 6"><path d="M0 0.5 H6 M0 2.5 H6 L3 5.5 Z" fill="#b0b0b0" stroke="#b0b0b0" stroke-width="0.6"/></svg>
<svg style="position:absolute;left:15px;top:57px" width="10" height="10" viewBox="0 0 10 10"><circle cx="5" cy="5" r="4.6" fill="#75beff"/><path d="M7.5 5 H3 M5 2.8 L2.8 5 L5 7.2" fill="none" stroke="#1e1e1e" stroke-width="1.3"/></svg>
<svg style="position:absolute;left:29px;top:60px" width="5" height="4" viewBox="0 0 5 4"><path d="M0 0 H5 L2.5 3 Z" fill="#999"/></svg>
<svg style="position:absolute;left:37px;top:57px" width="10" height="10" viewBox="0 0 10 10"><circle cx="5" cy="5" r="4.3" fill="none" stroke="#5a5a5a" stroke-width="1.1"/><path d="M2.5 5 H7 M5 2.8 L7.2 5 L5 7.2" fill="none" stroke="#5a5a5a" stroke-width="1.1"/></svg>
<div style="left:52px;top:56px;width:1px;height:12px;background:#3f3f46"></div>
<svg style="position:absolute;left:57px;top:57px" width="10" height="11" viewBox="0 0 10 11"><path d="M1 2 H6 L9 5 V10 H1 Z" fill="none" stroke="#5a5a5a"/></svg>
<span class="t" style="left:300px;top:58.77px;font-size:9px;line-height:9px;color:#6e6e6e;font-family:'Liberation Sans', sans-serif;transform:scaleX(1.1646);transform-origin:0 0;">顯示值(C)</span>
<svg style="position:absolute;left:349px;top:61px" width="5" height="4" viewBox="0 0 5 4"><path d="M0 0 H5 L2.5 3 Z" fill="#6e6e6e"/></svg>
<div style="left:359px;top:56px;width:1px;height:12px;background:#3f3f46"></div>
<svg style="position:absolute;left:362px;top:57px" width="11" height="12" viewBox="0 0 11 12"><path d="M1 2 H5 L6 3.5 H10.5 V10 H1 Z" fill="#e8b54a"/><rect x="3" y="4" width="7.5" height="6" fill="#f3c766"/><circle cx="3.8" cy="8" r="1.8" fill="none" stroke="#3f8fd6" stroke-width="1"/><path d="M2.6 9.3 L0.6 11.3" stroke="#3f8fd6" stroke-width="1.2"/></svg>
<svg style="position:absolute;left:378px;top:63px" width="5" height="6" viewBox="0 0 5 6"><path d="M0 0.5 H5 M0 2.5 H5 L2.5 5 Z" fill="#b0b0b0" stroke="#b0b0b0" stroke-width="0.6"/></svg>
<span class="t" style="left:1007px;top:78px;font-size:9px;line-height:9px;transform:scaleY(0.88);transform-origin:0 0;color:#c8c8c8;font-family:'Liberation Sans',sans-serif;writing-mode:vertical-rl;">Team Explorer</span>
<div style="left:1020px;top:78px;width:4px;height:60px;background:#3e3e42"></div>
<div style="left:385px;top:79px;width:76px;height:13px;background:#007acc"></div>
<span class="t" style="left:388px;top:81.30px;font-size:10px;line-height:10px;color:#ffffff;font-family:'Liberation Sans', sans-serif;transform:scaleX(0.7919);transform-origin:0 0;">Form1.cs</span>
<svg style="position:absolute;left:426px;top:82px" width="5" height="7" viewBox="0 0 5 7"><rect x="0.5" y="2.8" width="4" height="3.7" fill="#d8e8f4"/><path d="M1.3 3 V1.8 A1.2 1.2 0 0 1 3.7 1.8 V3" fill="none" stroke="#d8e8f4" stroke-width="0.8"/></svg>
<svg style="position:absolute;left:439px;top:82px" width="7" height="7" viewBox="0 0 7 7"><path d="M0.5 3.5 H2.5 M2.5 1 V6 M2.5 1.5 H5.5 V5.5 H2.5 M2.5 4 H5.5" fill="none" stroke="#fff" stroke-width="0.9"/></svg>
<svg style="position:absolute;left:450px;top:82px" width="7" height="7" viewBox="0 0 7 7"><path d="M1 1 L6 6 M6 1 L1 6" stroke="#fff" stroke-width="1.1"/></svg>
<div style="left:385px;top:92px;width:618px;height:2px;background:#007acc"></div>
<div style="left:385px;top:94px;width:618px;height:12.5px;background:#2d2d30"></div>
<div style="left:385px;top:94px;width:206px;height:12.5px;background:#333337;border:1px solid #434346;box-sizing:border-box"></div>
<div style="left:592px;top:94px;width:205px;height:12.5px;background:#333337;border:1px solid #434346;box-sizing:border-box"></div>
<div style="left:798px;top:94px;width:205px;height:12.5px;background:#333337;border:1px solid #434346;box-sizing:border-box"></div>
<div style="left:387px;top:95.5px;width:10px;height:8px;border:1px solid #6a9955;box-sizing:border-box;background:#252526"></div>
<span class="t" style="left:388.5px;top:97.12px;font-size:5.5px;line-height:5.5px;color:#e0e0e0;font-family:'Liberation Sans', sans-serif;">C#</span>
<span class="t" style="left:398px;top:95.30px;font-size:10px;line-height:10px;color:#f1f1f1;font-family:'Liberation Sans', sans-serif;transform:scaleX(0.8764);transform-origin:0 0;">20210407</span>
<svg style="position:absolute;left:583px;top:99px" width="5" height="3" viewBox="0 0 5 3"><path d="M0 0 H5 L2.5 3 Z" fill="#999"/></svg>
<svg style="position:absolute;left:594px;top:95px" width="12" height="10" viewBox="0 0 12 10"><path d="M1 4 L4 1 L7 4 L4 7 Z" fill="#e8a33d"/><path d="M5 6 H10 V9 H5 Z" fill="#e8a33d"/><path d="M8 2 A2 2 0 1 1 8 5" fill="none" stroke="#e8a33d" stroke-width="1"/></svg>
<span class="t" style="left:605px;top:95.30px;font-size:10px;line-height:10px;color:#f1f1f1;font-family:'Liberation Sans', sans-serif;transform:scaleX(0.8320);transform-origin:0 0;">_20210407.Form1</span>
<svg style="position:absolute;left:790px;top:99px" width="5" height="3" viewBox="0 0 5 3"><path d="M0 0 H5 L2.5 3 Z" fill="#999"/></svg>
<svg style="position:absolute;left:800px;top:96px" width="10" height="10" viewBox="0 0 10 10"><path d="M4 0.5 L7.5 2.5 V6 L4 8 L0.5 6 V2.5 Z" fill="none" stroke="#b180d7" stroke-width="1"/><rect x="6" y="6" width="3.5" height="3" fill="#d0d0d0"/></svg>
<span class="t" style="left:812px;top:95.30px;font-size:10px;line-height:10px;color:#f1f1f1;font-family:'Liberation Sans', sans-serif;transform:scaleX(0.8202);transform-origin:0 0;">Form1_Load(object sender, EventArgs e)</span>
<svg style="position:absolute;left:996px;top:99px" width="5" height="3" viewBox="0 0 5 3"><path d="M0 0 H5 L2.5 3 Z" fill="#999"/></svg>
<svg style="position:absolute;left:996px;top:84px" width="6" height="4" viewBox="0 0 6 4"><path d="M0 0 H6 L3 3.5 Z" fill="#e0e0e0"/></svg>
<div style="left:385px;top:106px;width:605px;height:281px;background:#1e1e1e"></div>
<div style="left:385px;top:106px;width:11px;height:281px;background:#2f2f32"></div>
<div style="left:990px;top:106px;width:13px;height:281px;background:#3e3e42"></div>
<div style="left:990px;top:106px;width:13px;height:12px;background:#1e1e1e"></div>
<svg style="position:absolute;left:992px;top:107px" width="9" height="9" viewBox="0 0 9 9"><path d="M4.5 0.5 V8.5 M0.5 4.5 H8.5" stroke="#e0e0e0" stroke-width="1.8"/><path d="M3 1.5 L4.5 0 L6 1.5 M3 7.5 L4.5 9 L6 7.5" fill="#e0e0e0"/></svg>
<svg style="position:absolute;left:993px;top:122px" width="7" height="4" viewBox="0 0 7 4"><path d="M0 4 L3.5 0 L7 4 Z" fill="#999"/></svg>
<div style="left:444.5px;top:106px;width:1px;height:281px;border-left:1px dotted #5a5a5a"></div>
<div style="left:461.5px;top:106px;width:1px;height:281px;border-left:1px dotted #5a5a5a"></div>
<div style="left:479px;top:106px;width:1px;height:250px;border-left:1px dotted #5a5a5a"></div>
<div style="left:496px;top:224.334px;width:1px;height:10.652000000000015px;border-left:1px dotted #5a5a5a"></div>
<div style="left:496px;top:303.616px;width:1px;height:10.652000000000044px;border-left:1px dotted #5a5a5a"></div>
<div style="left:431px;top:144px;width:3px;height:243px;background:#5b7f33"></div>
<div style="left:431px;top:106px;width:3px;height:5px;background:#5b7f33"></div>
<div style="left:438.5px;top:106px;width:1px;height:281px;background:#6a6a6a"></div>
<div style="left:0px;top:106px;width:1024px;height:281px;overflow:hidden">
<span class="t" style="left:409px;top:-4.63px;font-size:10px;line-height:10px;color:#2b91af;font-family:'Liberation Mono', monospace;transform:scaleX(0.7074);transform-origin:0 0;opacity:0.88;">60</span>
<span class="t" style="left:409px;top:6.70px;font-size:10px;line-height:10px;color:#2b91af;font-family:'Liberation Mono', monospace;transform:scaleX(0.7074);transform-origin:0 0;opacity:0.88;">61</span>
<span class="t" style="left:495.0px;top:6.70px;font-size:10px;line-height:10px;color:#dcdcdc;font-family:'Liberation Mono', monospace;transform:scaleX(0.7082);transform-origin:0 0;opacity:0.88;">lab_Opt.Text = </span>
<span class="t" style="left:558.75px;top:6.70px;font-size:10px;line-height:10px;color:#9cdcfe;font-family:'Liberation Mono', monospace;transform:scaleX(0.7080);transform-origin:0 0;opacity:0.88;">strOpt</span>
<span class="t" style="left:584.25px;top:6.70px;font-size:10px;line-height:10px;color:#dcdcdc;font-family:'Liberation Mono', monospace;transform:scaleX(0.7065);transform-origin:0 0;opacity:0.88;">;</span>
<span class="t" style="left:409px;top:18.03px;font-size:10px;line-height:10px;color:#2b91af;font-family:'Liberation Mono', monospace;transform:scaleX(0.7074);transform-origin:0 0;opacity:0.88;">62</span>
<span class="t" style="left:409px;top:29.35px;font-size:10px;line-height:10px;color:#2b91af;font-family:'Liberation Mono', monospace;transform:scaleX(0.7074);transform-origin:0 0;opacity:0.88;">63</span>
<span class="t" style="left:478.0px;top:29.35px;font-size:10px;line-height:10px;color:#dcdcdc;font-family:'Liberation Mono', monospace;transform:scaleX(0.7065);transform-origin:0 0;opacity:0.88;">}</span>
<span class="t" style="left:409px;top:40.68px;font-size:10px;line-height:10px;color:#2b91af;font-family:'Liberation Mono', monospace;transform:scaleX(0.7074);transform-origin:0 0;opacity:0.88;">64</span>
<span class="t" style="left:409px;top:52.00px;font-size:10px;line-height:10px;color:#2b91af;font-family:'Liberation Mono', monospace;transform:scaleX(0.7074);transform-origin:0 0;opacity:0.88;">65</span>
<span class="t" style="left:478.0px;top:52.00px;font-size:10px;line-height:10px;color:#569cd6;font-family:'Liberation Mono', monospace;transform:scaleX(0.7081);transform-origin:0 0;opacity:0.88;">private</span>
<span class="t" style="left:512.0px;top:52.00px;font-size:10px;line-height:10px;color:#569cd6;font-family:'Liberation Mono', monospace;transform:scaleX(0.7079);transform-origin:0 0;opacity:0.88;">void</span>
<span class="t" style="left:533.25px;top:52.00px;font-size:10px;line-height:10px;color:#dcdcaa;font-family:'Liberation Mono', monospace;transform:scaleX(0.7081);transform-origin:0 0;opacity:0.88;">Form1_Load</span>
<span class="t" style="left:575.75px;top:52.00px;font-size:10px;line-height:10px;color:#dcdcdc;font-family:'Liberation Mono', monospace;transform:scaleX(0.7065);transform-origin:0 0;opacity:0.88;">(</span>
<span class="t" style="left:580.0px;top:52.00px;font-size:10px;line-height:10px;color:#569cd6;font-family:'Liberation Mono', monospace;transform:scaleX(0.7080);transform-origin:0 0;opacity:0.88;">object</span>
<span class="t" style="left:609.75px;top:52.00px;font-size:10px;line-height:10px;color:#9cdcfe;font-family:'Liberation Mono', monospace;transform:scaleX(0.7080);transform-origin:0 0;opacity:0.88;">sender</span>
<span class="t" style="left:635.25px;top:52.00px;font-size:10px;line-height:10px;color:#dcdcdc;font-family:'Liberation Mono', monospace;transform:scaleX(0.7074);transform-origin:0 0;opacity:0.88;">, </span>
<span class="t" style="left:643.75px;top:52.00px;font-size:10px;line-height:10px;color:#4ec9b0;font-family:'Liberation Mono', monospace;transform:scaleX(0.7081);transform-origin:0 0;opacity:0.88;">EventArgs</span>
<span class="t" style="left:686.25px;top:52.00px;font-size:10px;line-height:10px;color:#9cdcfe;font-family:'Liberation Mono', monospace;transform:scaleX(0.7065);transform-origin:0 0;opacity:0.88;">e</span>
<span class="t" style="left:690.5px;top:52.00px;font-size:10px;line-height:10px;color:#dcdcdc;font-family:'Liberation Mono', monospace;transform:scaleX(0.7065);transform-origin:0 0;opacity:0.88;">)</span>
<span class="t" style="left:409px;top:63.33px;font-size:10px;line-height:10px;color:#2b91af;font-family:'Liberation Mono', monospace;transform:scaleX(0.7074);transform-origin:0 0;opacity:0.88;">66</span>
<span class="t" style="left:478.0px;top:63.33px;font-size:10px;line-height:10px;color:#dcdcdc;font-family:'Liberation Mono', monospace;transform:scaleX(0.7065);transform-origin:0 0;opacity:0.88;">{</span>
<span class="t" style="left:409px;top:74.66px;font-size:10px;line-height:10px;color:#2b91af;font-family:'Liberation Mono', monospace;transform:scaleX(0.7074);transform-origin:0 0;opacity:0.88;">67</span>
<span class="t" style="left:495.0px;top:74.66px;font-size:10px;line-height:10px;color:#569cd6;font-family:'Liberation Mono', monospace;transform:scaleX(0.7077);transform-origin:0 0;opacity:0.88;">int</span>
<span class="t" style="left:512.0px;top:74.66px;font-size:10px;line-height:10px;color:#9cdcfe;font-family:'Liberation Mono', monospace;transform:scaleX(0.7065);transform-origin:0 0;opacity:0.88;">i</span>
<span class="t" style="left:516.25px;top:74.66px;font-size:10px;line-height:10px;color:#dcdcdc;font-family:'Liberation Mono', monospace;transform:scaleX(0.7065);transform-origin:0 0;opacity:0.88;">;</span>
<span class="t" style="left:409px;top:85.98px;font-size:10px;line-height:10px;color:#2b91af;font-family:'Liberation Mono', monospace;transform:scaleX(0.7074);transform-origin:0 0;opacity:0.88;">68</span>
<span class="t" style="left:409px;top:97.31px;font-size:10px;line-height:10px;color:#2b91af;font-family:'Liberation Mono', monospace;transform:scaleX(0.7074);transform-origin:0 0;opacity:0.88;">69</span>
<span class="t" style="left:495.0px;top:97.31px;font-size:10px;line-height:10px;color:#d8a0df;font-family:'Liberation Mono', monospace;transform:scaleX(0.7077);transform-origin:0 0;opacity:0.88;">for</span>
<span class="t" style="left:512.0px;top:97.31px;font-size:10px;line-height:10px;color:#dcdcdc;font-family:'Liberation Mono', monospace;transform:scaleX(0.7065);transform-origin:0 0;opacity:0.88;">(</span>
<span class="t" style="left:516.25px;top:97.31px;font-size:10px;line-height:10px;color:#9cdcfe;font-family:'Liberation Mono', monospace;transform:scaleX(0.7065);transform-origin:0 0;opacity:0.88;">i</span>
<span class="t" style="left:524.75px;top:97.31px;font-size:10px;line-height:10px;color:#dcdcdc;font-family:'Liberation Mono', monospace;transform:scaleX(0.7074);transform-origin:0 0;opacity:0.88;">= </span>
<span class="t" style="left:533.25px;top:97.31px;font-size:10px;line-height:10px;color:#b5cea8;font-family:'Liberation Mono', monospace;transform:scaleX(0.7065);transform-origin:0 0;opacity:0.88;">1</span>
<span class="t" style="left:537.5px;top:97.31px;font-size:10px;line-height:10px;color:#dcdcdc;font-family:'Liberation Mono', monospace;transform:scaleX(0.7074);transform-origin:0 0;opacity:0.88;">; </span>
<span class="t" style="left:546.0px;top:97.31px;font-size:10px;line-height:10px;color:#9cdcfe;font-family:'Liberation Mono', monospace;transform:scaleX(0.7065);transform-origin:0 0;opacity:0.88;">i</span>
<span class="t" style="left:554.5px;top:97.31px;font-size:10px;line-height:10px;color:#dcdcdc;font-family:'Liberation Mono', monospace;transform:scaleX(0.7077);transform-origin:0 0;opacity:0.88;">&lt;= </span>
<span class="t" style="left:567.25px;top:97.31px;font-size:10px;line-height:10px;color:#b5cea8;font-family:'Liberation Mono', monospace;transform:scaleX(0.7074);transform-origin:0 0;opacity:0.88;">12</span>
<span class="t" style="left:575.75px;top:97.31px;font-size:10px;line-height:10px;color:#dcdcdc;font-family:'Liberation Mono', monospace;transform:scaleX(0.7074);transform-origin:0 0;opacity:0.88;">; </span>
<span class="t" style="left:584.25px;top:97.31px;font-size:10px;line-height:10px;color:#9cdcfe;font-family:'Liberation Mono', monospace;transform:scaleX(0.7065);transform-origin:0 0;opacity:0.88;">i</span>
<span class="t" style="left:588.5px;top:97.31px;font-size:10px;line-height:10px;color:#dcdcdc;font-family:'Liberation Mono', monospace;transform:scaleX(0.7077);transform-origin:0 0;opacity:0.88;">++)</span>
<span class="t" style="left:409px;top:108.63px;font-size:10px;line-height:10px;color:#2b91af;font-family:'Liberation Mono', monospace;transform:scaleX(0.7074);transform-origin:0 0;opacity:0.88;">70</span>
<span class="t" style="left:495.0px;top:108.63px;font-size:10px;line-height:10px;color:#dcdcdc;font-family:'Liberation Mono', monospace;transform:scaleX(0.7065);transform-origin:0 0;opacity:0.88;">{</span>
<span class="t" style="left:409px;top:119.96px;font-size:10px;line-height:10px;color:#2b91af;font-family:'Liberation Mono', monospace;transform:scaleX(0.7074);transform-origin:0 0;opacity:0.88;">71</span>
<span class="t" style="left:512.0px;top:119.96px;font-size:10px;line-height:10px;color:#dcdcdc;font-family:'Liberation Mono', monospace;transform:scaleX(0.7082);transform-origin:0 0;opacity:0.88;">cbx_BDM.Items.</span>
<span class="t" style="left:571.5px;top:119.96px;font-size:10px;line-height:10px;color:#dcdcaa;font-family:'Liberation Mono', monospace;transform:scaleX(0.7077);transform-origin:0 0;opacity:0.88;">Add</span>
<span class="t" style="left:584.25px;top:119.96px;font-size:10px;line-height:10px;color:#dcdcdc;font-family:'Liberation Mono', monospace;transform:scaleX(0.7065);transform-origin:0 0;opacity:0.88;">(</span>
<span class="t" style="left:588.5px;top:119.96px;font-size:10px;line-height:10px;color:#9cdcfe;font-family:'Liberation Mono', monospace;transform:scaleX(0.7065);transform-origin:0 0;opacity:0.88;">i</span>
<span class="t" style="left:592.75px;top:119.96px;font-size:10px;line-height:10px;color:#dcdcdc;font-family:'Liberation Mono', monospace;transform:scaleX(0.7074);transform-origin:0 0;opacity:0.88;">);</span>
<span class="t" style="left:409px;top:131.29px;font-size:10px;line-height:10px;color:#2b91af;font-family:'Liberation Mono', monospace;transform:scaleX(0.7074);transform-origin:0 0;opacity:0.88;">72</span>
<span class="t" style="left:495.0px;top:131.29px;font-size:10px;line-height:10px;color:#dcdcdc;font-family:'Liberation Mono', monospace;transform:scaleX(0.7065);transform-origin:0 0;opacity:0.88;">}</span>
<span class="t" style="left:409px;top:142.61px;font-size:10px;line-height:10px;color:#2b91af;font-family:'Liberation Mono', monospace;transform:scaleX(0.7074);transform-origin:0 0;opacity:0.88;">73</span>
<span class="t" style="left:409px;top:153.94px;font-size:10px;line-height:10px;color:#2b91af;font-family:'Liberation Mono', monospace;transform:scaleX(0.7074);transform-origin:0 0;opacity:0.88;">74</span>
<span class="t" style="left:495.0px;top:153.94px;font-size:10px;line-height:10px;color:#569cd6;font-family:'Liberation Mono', monospace;transform:scaleX(0.7077);transform-origin:0 0;opacity:0.88;">int</span>
<span class="t" style="left:512.0px;top:153.94px;font-size:10px;line-height:10px;color:#9cdcfe;font-family:'Liberation Mono', monospace;transform:scaleX(0.7079);transform-origin:0 0;opacity:0.88;">iYoT</span>
<span class="t" style="left:529.0px;top:153.94px;font-size:10px;line-height:10px;color:#dcdcdc;font-family:'Liberation Mono', monospace;transform:scaleX(0.7065);transform-origin:0 0;opacity:0.88;">=</span>
<span class="t" style="left:533.25px;top:153.94px;font-size:10px;line-height:10px;color:#4ec9b0;font-family:'Liberation Mono', monospace;transform:scaleX(0.7081);transform-origin:0 0;opacity:0.88;">DateTime</span>
<span class="t" style="left:567.25px;top:153.94px;font-size:10px;line-height:10px;color:#dcdcdc;font-family:'Liberation Mono', monospace;transform:scaleX(0.7082);transform-origin:0 0;opacity:0.88;">.Today.Year;</span>
<span class="t" style="left:409px;top:165.26px;font-size:10px;line-height:10px;color:#2b91af;font-family:'Liberation Mono', monospace;transform:scaleX(0.7074);transform-origin:0 0;opacity:0.88;">75</span>
<span class="t" style="left:409px;top:176.59px;font-size:10px;line-height:10px;color:#2b91af;font-family:'Liberation Mono', monospace;transform:scaleX(0.7074);transform-origin:0 0;opacity:0.88;">76</span>
<span class="t" style="left:495.0px;top:176.59px;font-size:10px;line-height:10px;color:#d8a0df;font-family:'Liberation Mono', monospace;transform:scaleX(0.7077);transform-origin:0 0;opacity:0.88;">for</span>
<span class="t" style="left:512.0px;top:176.59px;font-size:10px;line-height:10px;color:#dcdcdc;font-family:'Liberation Mono', monospace;transform:scaleX(0.7065);transform-origin:0 0;opacity:0.88;">(</span>
<span class="t" style="left:516.25px;top:176.59px;font-size:10px;line-height:10px;color:#9cdcfe;font-family:'Liberation Mono', monospace;transform:scaleX(0.7065);transform-origin:0 0;opacity:0.88;">i</span>
<span class="t" style="left:524.75px;top:176.59px;font-size:10px;line-height:10px;color:#dcdcdc;font-family:'Liberation Mono', monospace;transform:scaleX(0.7074);transform-origin:0 0;opacity:0.88;">= </span>
<span class="t" style="left:533.25px;top:176.59px;font-size:10px;line-height:10px;color:#9cdcfe;font-family:'Liberation Mono', monospace;transform:scaleX(0.7079);transform-origin:0 0;opacity:0.88;">iYoT</span>
<span class="t" style="left:550.25px;top:176.59px;font-size:10px;line-height:10px;color:#dcdcdc;font-family:'Liberation Mono', monospace;transform:scaleX(0.7074);transform-origin:0 0;opacity:0.88;">; </span>
<span class="t" style="left:558.75px;top:176.59px;font-size:10px;line-height:10px;color:#9cdcfe;font-family:'Liberation Mono', monospace;transform:scaleX(0.7065);transform-origin:0 0;opacity:0.88;">i</span>
<span class="t" style="left:563.0px;top:176.59px;font-size:10px;line-height:10px;color:#dcdcdc;font-family:'Liberation Mono', monospace;transform:scaleX(0.7077);transform-origin:0 0;opacity:0.88;">&gt;= </span>
<span class="t" style="left:575.75px;top:176.59px;font-size:10px;line-height:10px;color:#9cdcfe;font-family:'Liberation Mono', monospace;transform:scaleX(0.7079);transform-origin:0 0;opacity:0.88;">iYoT</span>
<span class="t" style="left:592.75px;top:176.59px;font-size:10px;line-height:10px;color:#dcdcdc;font-family:'Liberation Mono', monospace;transform:scaleX(0.7065);transform-origin:0 0;opacity:0.88;">-</span>
<span class="t" style="left:597.0px;top:176.59px;font-size:10px;line-height:10px;color:#b5cea8;font-family:'Liberation Mono', monospace;transform:scaleX(0.7077);transform-origin:0 0;opacity:0.88;">130</span>
<span class="t" style="left:609.75px;top:176.59px;font-size:10px;line-height:10px;color:#dcdcdc;font-family:'Liberation Mono', monospace;transform:scaleX(0.7074);transform-origin:0 0;opacity:0.88;">; </span>
<span class="t" style="left:618.25px;top:176.59px;font-size:10px;line-height:10px;color:#9cdcfe;font-family:'Liberation Mono', monospace;transform:scaleX(0.7065);transform-origin:0 0;opacity:0.88;">i</span>
<span class="t" style="left:622.5px;top:176.59px;font-size:10px;line-height:10px;color:#dcdcdc;font-family:'Liberation Mono', monospace;transform:scaleX(0.7077);transform-origin:0 0;opacity:0.88;">--)</span>
<span class="t" style="left:409px;top:187.92px;font-size:10px;line-height:10px;color:#2b91af;font-family:'Liberation Mono', monospace;transform:scaleX(0.7074);transform-origin:0 0;opacity:0.88;">77</span>
<span class="t" style="left:495.0px;top:187.92px;font-size:10px;line-height:10px;color:#dcdcdc;font-family:'Liberation Mono', monospace;transform:scaleX(0.7065);transform-origin:0 0;opacity:0.88;">{</span>
<span class="t" style="left:409px;top:199.24px;font-size:10px;line-height:10px;color:#2b91af;font-family:'Liberation Mono', monospace;transform:scaleX(0.7074);transform-origin:0 0;opacity:0.88;">78</span>
<span class="t" style="left:512.0px;top:199.24px;font-size:10px;line-height:10px;color:#dcdcdc;font-family:'Liberation Mono', monospace;transform:scaleX(0.7082);transform-origin:0 0;opacity:0.88;">cbx_BDY.Items.</span>
<span class="t" style="left:571.5px;top:199.24px;font-size:10px;line-height:10px;color:#dcdcaa;font-family:'Liberation Mono', monospace;transform:scaleX(0.7077);transform-origin:0 0;opacity:0.88;">Add</span>
<span class="t" style="left:584.25px;top:199.24px;font-size:10px;line-height:10px;color:#dcdcdc;font-family:'Liberation Mono', monospace;transform:scaleX(0.7065);transform-origin:0 0;opacity:0.88;">(</span>
<span class="t" style="left:588.5px;top:199.24px;font-size:10px;line-height:10px;color:#9cdcfe;font-family:'Liberation Mono', monospace;transform:scaleX(0.7065);transform-origin:0 0;opacity:0.88;">i</span>
<span class="t" style="left:592.75px;top:199.24px;font-size:10px;line-height:10px;color:#dcdcdc;font-family:'Liberation Mono', monospace;transform:scaleX(0.7074);transform-origin:0 0;opacity:0.88;">);</span>
<span class="t" style="left:409px;top:210.57px;font-size:10px;line-height:10px;color:#2b91af;font-family:'Liberation Mono', monospace;transform:scaleX(0.7074);transform-origin:0 0;opacity:0.88;">79</span>
<span class="t" style="left:495.0px;top:210.57px;font-size:10px;line-height:10px;color:#dcdcdc;font-family:'Liberation Mono', monospace;transform:scaleX(0.7065);transform-origin:0 0;opacity:0.88;">}</span>
<span class="t" style="left:409px;top:221.89px;font-size:10px;line-height:10px;color:#2b91af;font-family:'Liberation Mono', monospace;transform:scaleX(0.7074);transform-origin:0 0;opacity:0.88;">80</span>
<span class="t" style="left:409px;top:233.22px;font-size:10px;line-height:10px;color:#2b91af;font-family:'Liberation Mono', monospace;transform:scaleX(0.7074);transform-origin:0 0;opacity:0.88;">81</span>
<span class="t" style="left:409px;top:244.55px;font-size:10px;line-height:10px;color:#2b91af;font-family:'Liberation Mono', monospace;transform:scaleX(0.7074);transform-origin:0 0;opacity:0.88;">82</span>
<span class="t" style="left:478.0px;top:244.55px;font-size:10px;line-height:10px;color:#dcdcdc;font-family:'Liberation Mono', monospace;transform:scaleX(0.7065);transform-origin:0 0;opacity:0.88;">}</span>
<span class="t" style="left:409px;top:255.87px;font-size:10px;line-height:10px;color:#2b91af;font-family:'Liberation Mono', monospace;transform:scaleX(0.7074);transform-origin:0 0;opacity:0.88;">83</span>
<span class="t" style="left:409px;top:267.20px;font-size:10px;line-height:10px;color:#2b91af;font-family:'Liberation Mono', monospace;transform:scaleX(0.7074);transform-origin:0 0;opacity:0.88;">84</span>
<span class="t" style="left:461.0px;top:267.20px;font-size:10px;line-height:10px;color:#dcdcdc;font-family:'Liberation Mono', monospace;transform:scaleX(0.7065);transform-origin:0 0;opacity:0.88;">}</span>
<span class="t" style="left:409px;top:278.52px;font-size:10px;line-height:10px;color:#2b91af;font-family:'Liberation Mono', monospace;transform:scaleX(0.7074);transform-origin:0 0;opacity:0.88;">85</span>
</div>
<div style="left:442px;top:281px;width:548px;height:11px;border:1px solid #464646;box-sizing:border-box"></div>
<svg style="position:absolute;left:435px;top:159.204px" width="8" height="7" viewBox="0 0 8 7"><rect x="0.5" y="0.5" width="6.5" height="6" fill="#1e1e1e" stroke="#8a8a8a" stroke-width="1"/><path d="M2 3.5 H5.5" stroke="#c8c8c8" stroke-width="1.2"/></svg>
<svg style="position:absolute;left:435px;top:204.508px" width="8" height="7" viewBox="0 0 8 7"><rect x="0.5" y="0.5" width="6.5" height="6" fill="#1e1e1e" stroke="#8a8a8a" stroke-width="1"/><path d="M2 3.5 H5.5" stroke="#c8c8c8" stroke-width="1.2"/></svg>
<svg style="position:absolute;left:435px;top:283.79px" width="8" height="7" viewBox="0 0 8 7"><rect x="0.5" y="0.5" width="6.5" height="6" fill="#1e1e1e" stroke="#8a8a8a" stroke-width="1"/><path d="M2 3.5 H5.5" stroke="#c8c8c8" stroke-width="1.2"/></svg>
<div style="left:439px;top:143.05200000000002px;width:3px;height:1px;background:#8a8a8a"></div>
<div style="left:439px;top:244.98600000000002px;width:3px;height:1px;background:#8a8a8a"></div>
<div style="left:439px;top:324.26800000000003px;width:3px;height:1px;background:#8a8a8a"></div>
<div style="left:439px;top:358.246px;width:3px;height:1px;background:#8a8a8a"></div>
<div style="left:439px;top:380.898px;width:3px;height:1px;background:#8a8a8a"></div>
<svg style="position:absolute;left:418px;top:281px" width="10" height="11" viewBox="0 0 10 11"><path d="M5 0.5 C7.6 0.5 9.3 2.2 9.3 4.4 C9.3 6 8.2 6.8 7.3 7.8 V8.5 H2.7 V7.8 C1.8 6.8 0.7 6 0.7 4.4 C0.7 2.2 2.4 0.5 5 0.5 Z" fill="#ffd83a"/><rect x="2.8" y="8.8" width="4.4" height="1.8" fill="#c8c8c8"/></svg>
<div style="left:482px;top:247px;width:171px;height:93px;border:3px solid #ed1c24;box-sizing:border-box"></div>
<div style="left:991px;top:180px;width:3px;height:35px;background:#5b7f33"></div>
<div style="left:991px;top:219px;width:3px;height:29px;background:#5b7f33"></div>
<div style="left:991px;top:213px;width:3px;height:3px;background:#5b7f33"></div>
<div style="left:994px;top:262px;width:6px;height:58px;background:#686868"></div>
<div style="left:991px;top:226px;width:3px;height:94px;background:#5b7f33"></div>
<div style="left:991px;top:264px;width:3px;height:4px;background:#3e3e42"></div>
<div style="left:989px;top:297px;width:14px;height:2px;background:#e8e8e8"></div>
<svg style="position:absolute;left:993px;top:377px" width="7" height="4" viewBox="0 0 7 4"><path d="M0 0 L3.5 4 L7 0 Z" fill="#999"/></svg>
<div style="left:385px;top:387px;width:618px;height:12.5px;background:#3e3e42"></div>
<div style="left:385px;top:387px;width:39px;height:12.5px;background:#333337"></div>
<span class="t" style="left:387px;top:388.30px;font-size:10px;line-height:10px;color:#e0e0e0;font-family:'Liberation Sans', sans-serif;transform:scaleX(0.8463);transform-origin:0 0;">100 %</span>
<svg style="position:absolute;left:419px;top:392px" width="5" height="3" viewBox="0 0 5 3"><path d="M0 0 H5 L2.5 3 Z" fill="#e0e0e0"/></svg>
<svg style="position:absolute;left:439px;top:388px" width="10" height="10" viewBox="0 0 10 10"><circle cx="5" cy="5" r="4.8" fill="#2ea043"/><path d="M2.6 5 L4.3 6.8 L7.5 3.3" fill="none" stroke="#fff" stroke-width="1.3"/></svg>
<span class="t" style="left:451px;top:389.27px;font-size:9px;line-height:9px;color:#e0e0e0;font-family:'Liberation Sans', sans-serif;transform:scaleX(0.8254);transform-origin:0 0;">找不到任何問題</span>
<div style="left:547px;top:388px;width:1px;height:10px;background:#bcbcbc"></div>
<svg style="position:absolute;left:557px;top:388px" width="10" height="10" viewBox="0 0 10 10"><path d="M1 9 L4 6 M3 4 L6 7 L9 1 Z" fill="none" stroke="#d0d0d0" stroke-width="1"/></svg>
<svg style="position:absolute;left:569px;top:392px" width="5" height="3" viewBox="0 0 5 3"><path d="M0 0 H5 L2.5 3 Z" fill="#e0e0e0"/></svg>
<svg style="position:absolute;left:594px;top:389px" width="4" height="7" viewBox="0 0 4 7"><path d="M4 0 V7 L0 3.5 Z" fill="#5a5a5a"/></svg>
<svg style="position:absolute;left:983px;top:389px" width="4" height="7" viewBox="0 0 4 7"><path d="M0 0 V7 L4 3.5 Z" fill="#5a5a5a"/></svg>
<div style="left:990px;top:387px;width:13px;height:12.5px;background:#3e3e42"></div>
<div style="left:0px;top:402px;width:503px;height:18px;background:#2d2d30;border:1px solid #3f3f46;box-sizing:border-box"></div>
<div style="left:8px;top:407px;width:455px;height:6px;background-image:radial-gradient(#3c3c40 0.6px, transparent 0.7px);background-size:3px 3px"></div>
<svg style="position:absolute;left:467px;top:408px" width="6" height="4" viewBox="0 0 6 4"><path d="M0 0 H6 L3 3.5 Z" fill="#e0e0e0"/></svg>
<svg style="position:absolute;left:477px;top:405px" width="6" height="9" viewBox="0 0 6 9"><path d="M1 0.5 H5 V5 H1 Z M0 5.5 H6 M3 5.5 V9" fill="none" stroke="#e0e0e0" stroke-width="1"/></svg>
<svg style="position:absolute;left:486px;top:405px" width="8" height="8" viewBox="0 0 8 8"><path d="M1 1 L7 7 M7 1 L1 7" stroke="#e0e0e0" stroke-width="1.2"/></svg>
<div style="left:505px;top:402px;width:498px;height:18px;background:#2d2d30;border:1px solid #3f3f46;box-sizing:border-box"></div>
<div style="left:545px;top:407px;width:425px;height:6px;background-image:radial-gradient(#3c3c40 0.6px, transparent 0.7px);background-size:3px 3px"></div>
<span class="t" style="left:506px;top:405.77px;font-size:9px;line-height:9px;color:#d0d0d0;font-family:'Liberation Sans', sans-serif;transform:scaleX(0.8889);transform-origin:0 0;">錯誤清單</span>
<svg style="position:absolute;left:972px;top:408px" width="6" height="4" viewBox="0 0 6 4"><path d="M0 0 H6 L3 3.5 Z" fill="#e0e0e0"/></svg>
<svg style="position:absolute;left:982px;top:405px" width="6" height="9" viewBox="0 0 6 9"><path d="M1 0.5 H5 V5 H1 Z M0 5.5 H6 M3 5.5 V9" fill="none" stroke="#e0e0e0" stroke-width="1"/></svg>
<svg style="position:absolute;left:990px;top:405px" width="8" height="8" viewBox="0 0 8 8"><path d="M1 1 L7 7 M7 1 L1 7" stroke="#e0e0e0" stroke-width="1.2"/></svg>
<div style="left:615px;top:417px;width:45px;height:2px;background:#3a79b5"></div>
<div style="left:665px;top:417px;width:44px;height:2px;background:#3a79b5"></div>
<div style="left:713px;top:417px;width:44px;height:2px;background:#3a79b5"></div>
<span class="t" style="left:8px;top:80.80px;font-size:10px;line-height:10px;color:#f1f1f1;font-family:'Liberation Sans', sans-serif;transform:scaleX(0.7984);transform-origin:0 0;">Form1.Designer.cs</span>
<div style="left:5px;top:93px;width:372px;height:305px;background:#1b1b1c"></div>
<div style="left:377px;top:93px;width:8px;height:305px;background:#252526"></div>
<div style="left:15px;top:103px;width:100px;height:295px;background:linear-gradient(#c4d2e3 0px,#dae5f2 20px,#d8e4f2 100%);border-radius:4px 4px 0 0">
<svg style="position:absolute;left:6px;top:7px" width="10" height="10" viewBox="0 0 10 10"><rect x="0" y="0" width="10" height="10" fill="#e4e4e4"/><rect x="4" y="0.5" width="5.5" height="5.5" fill="#f2c81e"/><rect x="0.5" y="3.5" width="3.5" height="3.5" fill="#d43a2a"/><rect x="4" y="6.5" width="5" height="3" fill="#4a8be0"/></svg>
<div style="left:5px;top:20px;width:95px;height:275px;background:#f0f0f0"></div>
</div>
<span class="t" style="left:28px;top:142.77px;font-size:9px;line-height:9px;color:#000000;font-family:'Liberation Sans', sans-serif;transform:scaleX(0.8774);transform-origin:0 0;-webkit-text-stroke:0.25px #000;">姓名:</span>
<div style="left:52px;top:143px;width:40px;height:14px;background:#fff;border:1px solid #7a7a7a;box-sizing:border-box"></div>
<div style="left:28px;top:173px;width:60px;height:61px;border:1px solid #dcdcdc;box-sizing:border-box"></div>
<div style="left:30px;top:168px;width:22px;height:10px;background:#f0f0f0"></div>
<span class="t" style="left:32px;top:167.77px;font-size:9px;line-height:9px;color:#000000;font-family:'Liberation Sans', sans-serif;transform:scaleX(0.8774);transform-origin:0 0;-webkit-text-stroke:0.25px #000;">血型:</span>
<svg style="position:absolute;left:37px;top:186px" width="10" height="10" viewBox="0 0 10 10"><circle cx="5" cy="5" r="4.3" fill="#fff" stroke="#6a6a6a" stroke-width="0.9"/></svg>
<span class="t" style="left:49px;top:186.77px;font-size:9px;line-height:9px;color:#000000;font-family:'Liberation Sans', sans-serif;transform:scaleX(0.8658);transform-origin:0 0;-webkit-text-stroke:0.25px #000;">A型</span>
<svg style="position:absolute;left:37px;top:209px" width="10" height="10" viewBox="0 0 10 10"><circle cx="5" cy="5" r="4.3" fill="#fff" stroke="#6a6a6a" stroke-width="0.9"/></svg>
<span class="t" style="left:49px;top:209.77px;font-size:9px;line-height:9px;color:#000000;font-family:'Liberation Sans', sans-serif;transform:scaleX(0.8658);transform-origin:0 0;-webkit-text-stroke:0.25px #000;">B型</span>
<div style="left:27px;top:252px;width:60px;height:49px;border:1px solid #dcdcdc;box-sizing:border-box"></div>
<div style="left:29px;top:247px;width:22px;height:10px;background:#f0f0f0"></div>
<span class="t" style="left:31px;top:246.77px;font-size:9px;line-height:9px;color:#000000;font-family:'Liberation Sans', sans-serif;transform:scaleX(0.8774);transform-origin:0 0;-webkit-text-stroke:0.25px #000;">性別:</span>
<svg style="position:absolute;left:37px;top:265px" width="10" height="10" viewBox="0 0 10 10"><circle cx="5" cy="5" r="4.3" fill="#fff" stroke="#6a6a6a" stroke-width="0.9"/></svg>
<span class="t" style="left:49px;top:265.77px;font-size:9px;line-height:9px;color:#000000;font-family:'Liberation Sans', sans-serif;transform:scaleX(0.7778);transform-origin:0 0;-webkit-text-stroke:0.25px #000;">男</span>
<div style="left:28px;top:329px;width:60px;height:70px;border:1px solid #dcdcdc;box-sizing:border-box"></div>
<div style="left:30px;top:324px;width:24px;height:10px;background:#f0f0f0"></div>
<span class="t" style="left:32px;top:323.77px;font-size:9px;line-height:9px;color:#000000;font-family:'Liberation Sans', sans-serif;transform:scaleX(0.9261);transform-origin:0 0;-webkit-text-stroke:0.25px #000;">興趣:</span>
<svg style="position:absolute;left:32px;top:338.0px" width="9" height="9" viewBox="0 0 9 9"><rect x="0.5" y="0.5" width="8" height="8" fill="#fff" stroke="#6a6a6a" stroke-width="0.9"/></svg>
<span class="t" style="left:44px;top:338.27px;font-size:9px;line-height:9px;color:#000000;font-family:'Liberation Sans', sans-serif;transform:scaleX(0.8519);transform-origin:0 0;-webkit-text-stroke:0.25px #000;">看電影</span>
<svg style="position:absolute;left:32px;top:358.0px" width="9" height="9" viewBox="0 0 9 9"><rect x="0.5" y="0.5" width="8" height="8" fill="#fff" stroke="#6a6a6a" stroke-width="0.9"/></svg>
<span class="t" style="left:44px;top:358.27px;font-size:9px;line-height:9px;color:#000000;font-family:'Liberation Sans', sans-serif;transform:scaleX(0.8333);transform-origin:0 0;-webkit-text-stroke:0.25px #000;">逛街</span>
<svg style="position:absolute;left:32px;top:373.5px" width="9" height="9" viewBox="0 0 9 9"><rect x="0.5" y="0.5" width="8" height="8" fill="#fff" stroke="#6a6a6a" stroke-width="0.9"/></svg>
<span class="t" style="left:44px;top:373.77px;font-size:9px;line-height:9px;color:#000000;font-family:'Liberation Sans', sans-serif;transform:scaleX(0.8333);transform-origin:0 0;-webkit-text-stroke:0.25px #000;">購物</span>
<div style="left:0px;top:398px;width:75px;height:21px;background:#2d2d30"></div>
<div style="left:0px;top:402px;width:80px;height:18px;background:#2d2d30;border:1px solid #3f3f46;box-sizing:border-box"></div>
<span class="t" style="left:7px;top:405.77px;font-size:9px;line-height:9px;color:#d0d0d0;font-family:'Liberation Sans', sans-serif;transform:scaleX(0.8333);transform-origin:0 0;">自動變數</span>
<div style="left:75px;top:0px;width:302px;height:420px;background:#f0f0f0;border:1px solid rgba(0,0,0,0.38);border-left-color:rgba(255,255,255,0.85);border-right-color:#d0d0d0;background-clip:padding-box;box-sizing:border-box;overflow:hidden">
<div style="left:0px;top:0px;width:300px;height:20px;background:#ffffff"></div>
<svg style="position:absolute;left:5px;top:5px" width="10" height="10" viewBox="0 0 10 10"><rect x="0" y="0" width="10" height="10" fill="#e4e4e4"/><rect x="4" y="0.5" width="5.5" height="5.5" fill="#f2c81e"/><rect x="0.5" y="3.5" width="3.5" height="3.5" fill="#d43a2a"/><rect x="4" y="6.5" width="5" height="3" fill="#4a8be0"/></svg>
<div style="left:219px;top:10px;width:7px;height:1px;background:#222"></div>
<div style="left:250px;top:7px;width:7px;height:7px;border:1px solid #222;box-sizing:border-box"></div>
<svg style="position:absolute;left:281px;top:6px" width="9" height="9" viewBox="0 0 9 9"><path d="M1 1 L8 8 M8 1 L1 8" stroke="#222" stroke-width="1"/></svg>
<span class="t" style="left:8px;top:44.77px;font-size:9px;line-height:9px;color:#000000;font-family:'Liberation Sans', sans-serif;transform:scaleX(0.9261);transform-origin:0 0;-webkit-text-stroke:0.25px #000;">姓名:</span>
<div style="left:39px;top:44px;width:67px;height:15px;background:#fff;border:1px solid #9a9a9a;box-sizing:border-box"></div>
<div style="left:10px;top:79px;width:238px;height:79px;border:1px solid #dcdcdc;box-sizing:border-box"></div>
<div style="left:13px;top:74px;width:22px;height:10px;background:#f0f0f0"></div>
<span class="t" style="left:14px;top:74.77px;font-size:9px;line-height:9px;color:#000000;font-family:'Liberation Sans', sans-serif;transform:scaleX(0.8774);transform-origin:0 0;-webkit-text-stroke:0.25px #000;">血型:</span>
<svg style="position:absolute;left:20px;top:99px" width="10" height="10" viewBox="0 0 10 10"><circle cx="5" cy="5" r="4.3" fill="#fff" stroke="#6a6a6a" stroke-width="0.9"/></svg>
<span class="t" style="left:32px;top:99.77px;font-size:9px;line-height:9px;color:#000000;font-family:'Liberation Sans', sans-serif;transform:scaleX(0.9324);transform-origin:0 0;-webkit-text-stroke:0.25px #000;">A型</span>
<svg style="position:absolute;left:102.5px;top:99px" width="10" height="10" viewBox="0 0 10 10"><circle cx="5" cy="5" r="4.3" fill="#fff" stroke="#6a6a6a" stroke-width="0.9"/></svg>
<span class="t" style="left:114.5px;top:99.77px;font-size:9px;line-height:9px;color:#000000;font-family:'Liberation Sans', sans-serif;transform:scaleX(0.9054);transform-origin:0 0;-webkit-text-stroke:0.25px #000;">O型</span>
<svg style="position:absolute;left:20px;top:127px" width="10" height="10" viewBox="0 0 10 10"><circle cx="5" cy="5" r="4.3" fill="#fff" stroke="#6a6a6a" stroke-width="0.9"/></svg>
<span class="t" style="left:32px;top:127.77px;font-size:9px;line-height:9px;color:#000000;font-family:'Liberation Sans', sans-serif;transform:scaleX(0.9324);transform-origin:0 0;-webkit-text-stroke:0.25px #000;">B型</span>
<svg style="position:absolute;left:102.5px;top:127px" width="10" height="10" viewBox="0 0 10 10"><circle cx="5" cy="5" r="4.3" fill="#fff" stroke="#6a6a6a" stroke-width="0.9"/></svg>
<span class="t" style="left:114.5px;top:127.77px;font-size:9px;line-height:9px;color:#000000;font-family:'Liberation Sans', sans-serif;transform:scaleX(0.9755);transform-origin:0 0;-webkit-text-stroke:0.25px #000;">AB型</span>
<div style="left:10px;top:179px;width:176px;height:65px;border:1px solid #dcdcdc;box-sizing:border-box"></div>
<div style="left:13px;top:174px;width:22px;height:10px;background:#f0f0f0"></div>
<span class="t" style="left:14px;top:174.77px;font-size:9px;line-height:9px;color:#000000;font-family:'Liberation Sans', sans-serif;transform:scaleX(0.8774);transform-origin:0 0;-webkit-text-stroke:0.25px #000;">性別:</span>
<svg style="position:absolute;left:20px;top:198.5px" width="10" height="10" viewBox="0 0 10 10"><circle cx="5" cy="5" r="4.3" fill="#fff" stroke="#6a6a6a" stroke-width="0.9"/></svg>
<span class="t" style="left:32px;top:199.27px;font-size:9px;line-height:9px;color:#000000;font-family:'Liberation Sans', sans-serif;transform:scaleX(0.8889);transform-origin:0 0;-webkit-text-stroke:0.25px #000;">男</span>
<svg style="position:absolute;left:102.5px;top:198.5px" width="10" height="10" viewBox="0 0 10 10"><circle cx="5" cy="5" r="4.3" fill="#fff" stroke="#6a6a6a" stroke-width="0.9"/></svg>
<span class="t" style="left:114.5px;top:199.27px;font-size:9px;line-height:9px;color:#000000;font-family:'Liberation Sans', sans-serif;transform:scaleX(0.9444);transform-origin:0 0;-webkit-text-stroke:0.25px #000;">女</span>
<div style="left:10px;top:275px;width:238px;height:101px;border:1px solid #dcdcdc;box-sizing:border-box"></div>
<div style="left:13px;top:270px;width:22px;height:10px;background:#f0f0f0"></div>
<span class="t" style="left:14px;top:270.77px;font-size:9px;line-height:9px;color:#000000;font-family:'Liberation Sans', sans-serif;transform:scaleX(0.8774);transform-origin:0 0;-webkit-text-stroke:0.25px #000;">興趣:</span>
<svg style="position:absolute;left:103px;top:288.0px" width="9" height="9" viewBox="0 0 9 9"><rect x="0.5" y="0.5" width="8" height="8" fill="#fff" stroke="#6a6a6a" stroke-width="0.9"/><path d="M1.8 4.5 L3.8 6.5 L7.3 2.2" fill="none" stroke="#555" stroke-width="1.1"/></svg>
<span class="t" style="left:115px;top:288.27px;font-size:9px;line-height:9px;color:#000000;font-family:'Liberation Sans', sans-serif;transform:scaleX(0.9444);transform-origin:0 0;-webkit-text-stroke:0.25px #000;">唱歌</span>
<svg style="position:absolute;left:103px;top:315.0px" width="9" height="9" viewBox="0 0 9 9"><rect x="0.5" y="0.5" width="8" height="8" fill="#fff" stroke="#6a6a6a" stroke-width="0.9"/></svg>
<span class="t" style="left:115px;top:315.27px;font-size:9px;line-height:9px;color:#000000;font-family:'Liberation Sans', sans-serif;transform:scaleX(0.9444);transform-origin:0 0;-webkit-text-stroke:0.25px #000;">旅行</span>
<svg style="position:absolute;left:103px;top:332.5px" width="9" height="9" viewBox="0 0 9 9"><rect x="0.5" y="0.5" width="8" height="8" fill="#fff" stroke="#6a6a6a" stroke-width="0.9"/></svg>
<span class="t" style="left:115px;top:332.77px;font-size:9px;line-height:9px;color:#000000;font-family:'Liberation Sans', sans-serif;transform:scaleX(0.9444);transform-origin:0 0;-webkit-text-stroke:0.25px #000;">釣魚</span>
<svg style="position:absolute;left:20px;top:288.0px" width="9" height="9" viewBox="0 0 9 9"><rect x="0.5" y="0.5" width="8" height="8" fill="#fff" stroke="#6a6a6a" stroke-width="0.9"/></svg>
<span class="t" style="left:32px;top:288.27px;font-size:9px;line-height:9px;color:#000000;font-family:'Liberation Sans', sans-serif;transform:scaleX(0.6667);transform-origin:0 0;-webkit-text-stroke:0.25px #000;">看電影</span>
<svg style="position:absolute;left:20px;top:315.0px" width="9" height="9" viewBox="0 0 9 9"><rect x="0.5" y="0.5" width="8" height="8" fill="#fff" stroke="#6a6a6a" stroke-width="0.9"/></svg>
<span class="t" style="left:32px;top:315.27px;font-size:9px;line-height:9px;color:#000000;font-family:'Liberation Sans', sans-serif;transform:scaleX(0.5000);transform-origin:0 0;-webkit-text-stroke:0.25px #000;">逛街</span>
<svg style="position:absolute;left:20px;top:332.5px" width="9" height="9" viewBox="0 0 9 9"><rect x="0.5" y="0.5" width="8" height="8" fill="#fff" stroke="#6a6a6a" stroke-width="0.9"/></svg>
<span class="t" style="left:32px;top:332.77px;font-size:9px;line-height:9px;color:#000000;font-family:'Liberation Sans', sans-serif;transform:scaleX(0.5000);transform-origin:0 0;-webkit-text-stroke:0.25px #000;">購物</span>
<span class="t" style="left:55px;top:409.77px;font-size:9px;line-height:9px;color:#000000;font-family:'Liberation Sans', sans-serif;transform:scaleX(1.0000);transform-origin:0 0;-webkit-text-stroke:0.25px #000;">年</span>
<div style="left:72px;top:409px;width:42px;height:14px;background:#fff;border:1px solid #7a7a7a;box-sizing:border-box"></div>
<span class="t" style="left:75px;top:410.60px;font-size:10px;line-height:10px;color:#000000;font-family:'Liberation Serif', serif;transform:scaleX(1.1000);transform-origin:0 0;">12</span>
<svg style="position:absolute;left:104px;top:412px" width="6" height="4" viewBox="0 0 6 4"><path d="M0.5 0.5 L3 3 L5.5 0.5" fill="none" stroke="#444" stroke-width="0.9"/></svg>
<span class="t" style="left:121px;top:410.77px;font-size:9px;line-height:9px;color:#000000;font-family:'Liberation Sans', sans-serif;transform:scaleX(0.7778);transform-origin:0 0;-webkit-text-stroke:0.25px #000;">月</span>
<div style="left:138px;top:409px;width:38px;height:14px;background:#fff;border:1px solid #7a7a7a;box-sizing:border-box"></div>
<span class="t" style="left:141px;top:410.60px;font-size:10px;line-height:10px;color:#000000;font-family:'Liberation Serif', serif;transform:scaleX(1.1000);transform-origin:0 0;">12</span>
<svg style="position:absolute;left:166px;top:412px" width="6" height="4" viewBox="0 0 6 4"><path d="M0.5 0.5 L3 3 L5.5 0.5" fill="none" stroke="#444" stroke-width="0.9"/></svg>
<span class="t" style="left:183px;top:408.77px;font-size:9px;line-height:9px;color:#000000;font-family:'Liberation Sans', sans-serif;transform:scaleX(0.7778);transform-origin:0 0;-webkit-text-stroke:0.25px #000;">日</span>
</div>
<div style="left:83px;top:169px;width:43px;height:241px;background:#fff;border:1px solid #828790;box-sizing:border-box;box-shadow:1px 1px 1px rgba(0,0,0,0.2)"></div>
<span class="t" style="left:84.7px;top:169.60px;font-size:10px;line-height:10px;color:#111111;font-family:'Liberation Serif', serif;transform:scaleX(0.8150);transform-origin:0 0;">2021</span>
<span class="t" style="left:84.7px;top:177.58px;font-size:10px;line-height:10px;color:#111111;font-family:'Liberation Serif', serif;transform:scaleX(0.8150);transform-origin:0 0;">2020</span>
<span class="t" style="left:84.7px;top:185.56px;font-size:10px;line-height:10px;color:#111111;font-family:'Liberation Serif', serif;transform:scaleX(0.8150);transform-origin:0 0;">2019</span>
<span class="t" style="left:84.7px;top:193.54px;font-size:10px;line-height:10px;color:#111111;font-family:'Liberation Serif', serif;transform:scaleX(0.8150);transform-origin:0 0;">2018</span>
<span class="t" style="left:84.7px;top:201.52px;font-size:10px;line-height:10px;color:#111111;font-family:'Liberation Serif', serif;transform:scaleX(0.8150);transform-origin:0 0;">2017</span>
<span class="t" style="left:84.7px;top:209.50px;font-size:10px;line-height:10px;color:#111111;font-family:'Liberation Serif', serif;transform:scaleX(0.8150);transform-origin:0 0;">2016</span>
<span class="t" style="left:84.7px;top:217.48px;font-size:10px;line-height:10px;color:#111111;font-family:'Liberation Serif', serif;transform:scaleX(0.8150);transform-origin:0 0;">2015</span>
<span class="t" style="left:84.7px;top:225.46px;font-size:10px;line-height:10px;color:#111111;font-family:'Liberation Serif', serif;transform:scaleX(0.8150);transform-origin:0 0;">2014</span>
<span class="t" style="left:84.7px;top:233.44px;font-size:10px;line-height:10px;color:#111111;font-family:'Liberation Serif', serif;transform:scaleX(0.8150);transform-origin:0 0;">2013</span>
<span class="t" style="left:84.7px;top:241.42px;font-size:10px;line-height:10px;color:#111111;font-family:'Liberation Serif', serif;transform:scaleX(0.8150);transform-origin:0 0;">2012</span>
<span class="t" style="left:84.7px;top:249.40px;font-size:10px;line-height:10px;color:#111111;font-family:'Liberation Serif', serif;transform:scaleX(0.8299);transform-origin:0 0;">2011</span>
<span class="t" style="left:84.7px;top:257.38px;font-size:10px;line-height:10px;color:#111111;font-family:'Liberation Serif', serif;transform:scaleX(0.8150);transform-origin:0 0;">2010</span>
<span class="t" style="left:84.7px;top:265.36px;font-size:10px;line-height:10px;color:#111111;font-family:'Liberation Serif', serif;transform:scaleX(0.8150);transform-origin:0 0;">2009</span>
<span class="t" style="left:84.7px;top:273.34px;font-size:10px;line-height:10px;color:#111111;font-family:'Liberation Serif', serif;transform:scaleX(0.8150);transform-origin:0 0;">2008</span>
<span class="t" style="left:84.7px;top:281.32px;font-size:10px;line-height:10px;color:#111111;font-family:'Liberation Serif', serif;transform:scaleX(0.8150);transform-origin:0 0;">2007</span>
<span class="t" style="left:84.7px;top:289.30px;font-size:10px;line-height:10px;color:#111111;font-family:'Liberation Serif', serif;transform:scaleX(0.8150);transform-origin:0 0;">2006</span>
<span class="t" style="left:84.7px;top:297.28px;font-size:10px;line-height:10px;color:#111111;font-family:'Liberation Serif', serif;transform:scaleX(0.8150);transform-origin:0 0;">2005</span>
<span class="t" style="left:84.7px;top:305.26px;font-size:10px;line-height:10px;color:#111111;font-family:'Liberation Serif', serif;transform:scaleX(0.8150);transform-origin:0 0;">2004</span>
<span class="t" style="left:84.7px;top:313.24px;font-size:10px;line-height:10px;color:#111111;font-family:'Liberation Serif', serif;transform:scaleX(0.8150);transform-origin:0 0;">2003</span>
<span class="t" style="left:84.7px;top:321.22px;font-size:10px;line-height:10px;color:#111111;font-family:'Liberation Serif', serif;transform:scaleX(0.8150);transform-origin:0 0;">2002</span>
<span class="t" style="left:84.7px;top:329.20px;font-size:10px;line-height:10px;color:#111111;font-family:'Liberation Serif', serif;transform:scaleX(0.8150);transform-origin:0 0;">2001</span>
<div style="left:84px;top:337.58000000000004px;width:30px;height:8px;background:#0078d7"></div>
<span class="t" style="left:84.7px;top:337.18px;font-size:10px;line-height:10px;color:#ffffff;font-family:'Liberation Serif', serif;transform:scaleX(0.8150);transform-origin:0 0;">2000</span>
<span class="t" style="left:84.7px;top:345.16px;font-size:10px;line-height:10px;color:#111111;font-family:'Liberation Serif', serif;transform:scaleX(0.8150);transform-origin:0 0;">1999</span>
<span class="t" style="left:84.7px;top:353.14px;font-size:10px;line-height:10px;color:#111111;font-family:'Liberation Serif', serif;transform:scaleX(0.8150);transform-origin:0 0;">1998</span>
<span class="t" style="left:84.7px;top:361.12px;font-size:10px;line-height:10px;color:#111111;font-family:'Liberation Serif', serif;transform:scaleX(0.8150);transform-origin:0 0;">1997</span>
<span class="t" style="left:84.7px;top:369.10px;font-size:10px;line-height:10px;color:#111111;font-family:'Liberation Serif', serif;transform:scaleX(0.8150);transform-origin:0 0;">1996</span>
<span class="t" style="left:84.7px;top:377.08px;font-size:10px;line-height:10px;color:#111111;font-family:'Liberation Serif', serif;transform:scaleX(0.8150);transform-origin:0 0;">1995</span>
<span class="t" style="left:84.7px;top:385.06px;font-size:10px;line-height:10px;color:#111111;font-family:'Liberation Serif', serif;transform:scaleX(0.8150);transform-origin:0 0;">1994</span>
<span class="t" style="left:84.7px;top:393.04px;font-size:10px;line-height:10px;color:#111111;font-family:'Liberation Serif', serif;transform:scaleX(0.8150);transform-origin:0 0;">1993</span>
<span class="t" style="left:84.7px;top:401.02px;font-size:10px;line-height:10px;color:#111111;font-family:'Liberation Serif', serif;transform:scaleX(0.8150);transform-origin:0 0;">1992</span>
<div style="left:114px;top:170px;width:10.5px;height:240px;background:#f0f0f0"></div>
<svg style="position:absolute;left:116px;top:174px" width="7" height="4" viewBox="0 0 7 4"><path d="M0.5 3.5 L3.5 0.5 L6.5 3.5" fill="none" stroke="#222" stroke-width="1.2"/></svg>
<div style="left:115px;top:182px;width:9px;height:49px;background:#cdcdcd"></div>
<svg style="position:absolute;left:116px;top:403px" width="7" height="4" viewBox="0 0 7 4"><path d="M0.5 0.5 L3.5 3.5 L6.5 0.5" fill="none" stroke="#222" stroke-width="1.2"/></svg>
<div style="left:83px;top:410px;width:43px;height:14px;background:#fff;border:1px solid #0078d7;box-sizing:border-box"></div>
<div style="left:84px;top:411px;width:17px;height:9px;background:#0078d7"></div>
<span class="t" style="left:84.5px;top:411.10px;font-size:10px;line-height:10px;color:#ffffff;font-family:'Liberation Serif', serif;transform:scaleX(0.8250);transform-origin:0 0;">2000</span>
<div style="left:114px;top:411px;width:11px;height:12px;background:#cce4f7;border-left:1px solid #569de5;box-sizing:border-box"></div>
<svg style="position:absolute;left:116px;top:414px" width="7" height="4" viewBox="0 0 7 4"><path d="M0.5 0.5 L3.5 3.5 L6.5 0.5" fill="none" stroke="#6a6a6a" stroke-width="0.9"/></svg>
<div style="left:76px;top:158px;width:58px;height:280px;border:3px solid #ed1c24;border-bottom:none;box-sizing:border-box"></div>
</div>
</body></html>
